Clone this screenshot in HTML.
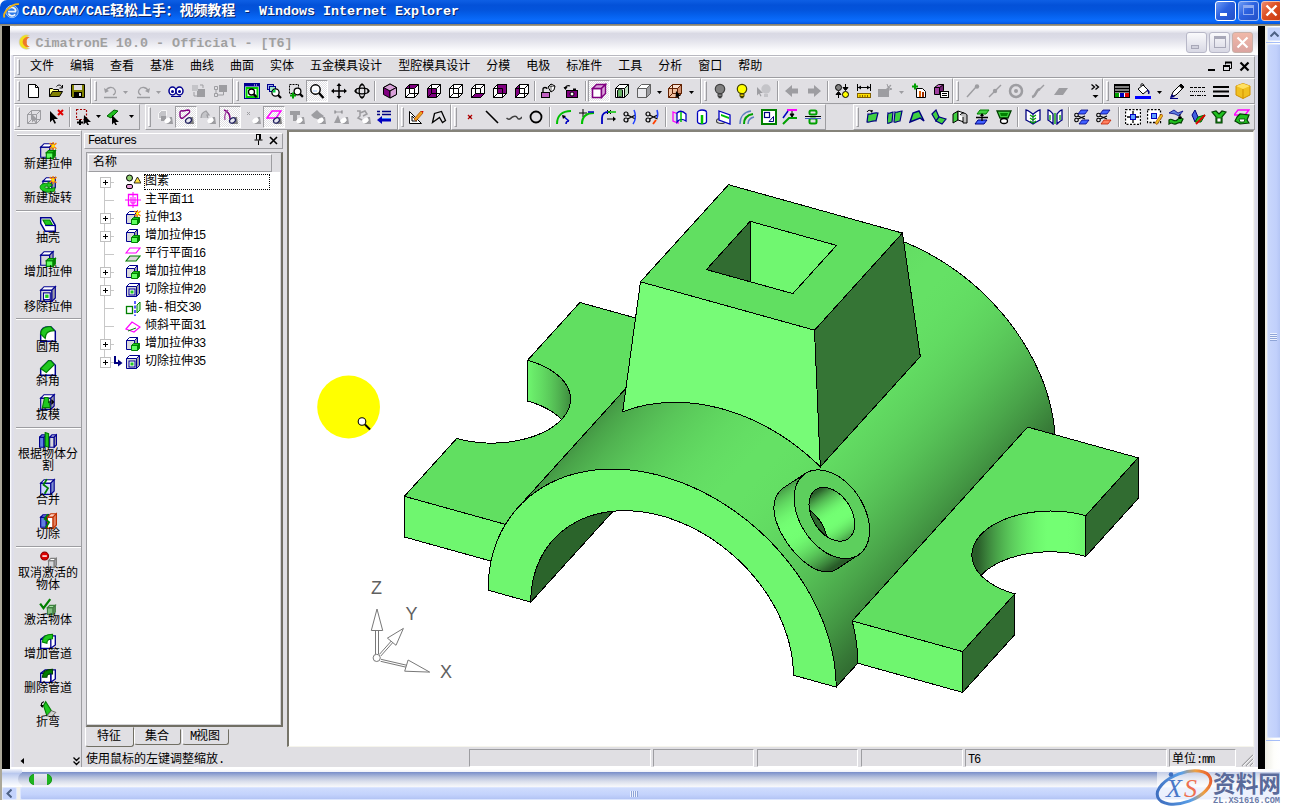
<!DOCTYPE html>
<html lang="zh-CN"><head><meta charset="utf-8"><title>CAD/CAM/CAE轻松上手：视频教程</title>
<style>
*{box-sizing:border-box;margin:0;padding:0}
html,body{width:1290px;height:812px;overflow:hidden;background:#fff}
body{position:relative;font-family:"Liberation Sans","Noto Sans CJK SC",sans-serif;font-size:12px;color:#000;line-height:1}
.a{position:absolute}
.cn{font-family:"Liberation Mono","Noto Sans CJK SC",sans-serif;font-size:12px;white-space:nowrap}
#ietitle{left:0;top:0;width:1280px;height:25px;border-radius:7px 0 0 0;overflow:hidden;
 background:linear-gradient(#0d5fe4 0,#0a5ae0 8%,#0351d8 20%,#0354dc 40%,#0560ec 60%,#0a6bfb 80%,#0966f4 88%,#0452da 96%,#0348cc 100%)}
#ietitle .t{left:22px;top:-1.5px;line-height:22px;color:#fff;font:bold 13.34px "Liberation Mono","Noto Sans CJK SC",monospace;white-space:nowrap;text-shadow:1px 1px 0 #0a246a;letter-spacing:0}
#ietitle .t b{font-size:14px;letter-spacing:-0.1px;font-weight:bold}
.capbtn{top:1px;width:21px;height:20px;border:1px solid #fff;border-radius:3px;background:linear-gradient(135deg,#6f9cf5 0,#2d62e0 45%,#2450c8 100%)}
#win{left:10px;top:26px;width:1248px;height:743px;background:#e0dfe3;border-radius:7px 7px 0 0}
#wtitle{height:29px;background:linear-gradient(#fff 0,#fcfcfe 10%,#d9d9e4 26%,#dcdce7 40%,#ebebf1 62%,#fafafc 82%,#fff 100%)}
#wtitle .t{left:25.5px;top:10px;line-height:14px;color:#a0a0a0;font:bold 13.4px "Liberation Mono",monospace;white-space:nowrap;}
.wbtn{top:6px;width:21px;height:21px;border:1px solid #b8b8c8;border-radius:3px;background:linear-gradient(#fafafc,#d8d8e4)}
.sep{background:#9d9da1;width:1px;box-shadow:1px 0 0 #fff}
.grip{width:3px;border-left:1px solid #fff;border-top:1px solid #fff;border-right:1px solid #9d9da1;border-bottom:1px solid #9d9da1;background:#e0dfe3}
.tbframe{border:1px solid;border-color:#fff #9d9da1 #9d9da1 #fff}
#menu span{display:inline-block;padding:0 8px}
.selbtn{border:1px solid;border-color:#9d9da1 #fff #fff #9d9da1;background:#fff;background-image:linear-gradient(45deg,#e0dfe3 25%,transparent 25%,transparent 75%,#e0dfe3 75%),linear-gradient(45deg,#e0dfe3 25%,transparent 25%,transparent 75%,#e0dfe3 75%);background-size:2px 2px;background-position:0 0,1px 1px}
.l{letter-spacing:-1.2px}
</style></head><body>
<!-- IE title bar -->
<div id="ietitle" class="a">
 <svg class="a" style="left:3px;top:2px" width="18" height="18" viewBox="0 0 18 18"><ellipse cx="9" cy="9.5" rx="6.2" ry="6.2" fill="#2f7be8" stroke="#9cc3f7" stroke-width="1"/><path d="M5 9.6h8M5.6 7a4 4 0 0 1 7.2 2.4M5.4 11.4a4 4 0 0 0 6.8 1" fill="none" stroke="#e8f2ff" stroke-width="1.7"/><path d="M1.5 15.5C-1 11 9 1 16 2.2" fill="none" stroke="#f0b310" stroke-width="1.8"/></svg>
 <div class="a t">CAD/CAM/CAE<b>轻松上手：视频教程</b> - Windows Internet Explorer</div>
 <div class="a capbtn" style="left:1215px"><i class="a" style="left:4px;top:11px;width:7px;height:3px;background:#fff"></i></div>
 <div class="a capbtn" style="left:1238px;border-color:#a9c1f5"><i class="a" style="left:4px;top:3px;width:11px;height:10px;border:1px solid #8eaaf0;border-top-width:3px"></i></div>
 <div class="a capbtn" style="left:1261px;background:linear-gradient(135deg,#ec8a6e 0,#dd4f22 45%,#c83a10 100%);border-color:#f3c0ac"><svg class="a" style="left:3px;top:2px" width="13" height="13"><path d="M1.5 1.5l10 10M11.5 1.5l-10 10" stroke="#fff" stroke-width="2.4"/></svg></div>
</div>
<div class="a" style="left:0;top:24px;width:1280px;height:2px;background:linear-gradient(#7d7967,#aaa594)"></div>
<!-- side strips -->
<div class="a" style="left:0;top:26px;width:2px;height:774px;background:#aca899"></div>
<div class="a" style="left:2px;top:26px;width:8px;height:743px;background:#000"></div>
<div class="a" style="left:1258px;top:26px;width:7px;height:743px;background:#000"></div>
<!-- IE vertical scrollbar -->
<div class="a" style="left:1265px;top:26px;width:15px;height:744px;background:linear-gradient(90deg,#eeede5,#fefefb 60%,#fff)"></div>
<div class="a" style="left:1267px;top:27px;width:13px;height:14px;background:#c4d3fc;border-radius:2px 0 0 2px;border:1px solid #dce6fd;border-right:0"><svg class="a" style="left:2px;top:3px" width="9" height="6"><path d="M0.5 5.5L4.5 1.5L8.5 5.5" fill="none" stroke="#4d6185" stroke-width="2"/></svg></div>
<div class="a" style="left:1266px;top:42px;width:14px;height:1px;background:#a5bdf8"></div>
<div class="a" style="left:1267px;top:44px;width:13px;height:694px;background:linear-gradient(90deg,#c9d7fc,#c1d0fb 70%,#b5c6f5);border-radius:2px 0 0 2px;border:1px solid #d8e2fd;border-right:0"></div>
<div class="a" style="left:1270px;top:333px;width:7px;height:8px;background:repeating-linear-gradient(#eef3ff 0 1px,#8fa5d8 1px 2px)"></div>
<div class="a" style="left:1266px;top:740px;width:14px;height:1px;background:#a5bdf8"></div>
<!-- player bar -->
<div class="a" style="left:2px;top:769px;width:1278px;height:18px;background:linear-gradient(#fff 0,#f2f4fa 14%,#7d92cb 19%,#8b9ed0 26%,#b4bfdc 45%,#d9deeb 68%,#eef0f6 88%,#f8f9fb 100%)"></div>
<div class="a" style="left:2px;top:769px;width:20px;height:18px;background:linear-gradient(#f4f6fc 0,#b9c8ee 25%,#dfe6f7 60%,#fff 100%)"></div>
<div class="a" style="left:18px;top:772px;width:16px;height:14px;border-radius:7px 0 0 7px;background:linear-gradient(#7d92cb 0,#8b9ed0 10%,#b4bfdc 40%,#d9deeb 70%,#f2f4f8 100%)"></div>
<div class="a" style="left:29px;top:774px;width:23px;height:11px;border-radius:5px;background:#1eb41e;border:1px solid #169a16"></div>
<div class="a" style="left:34px;top:774px;width:13px;height:11px;background:linear-gradient(#e6e7ee,#cfd1de)"></div>
<!-- IE horizontal scrollbar -->
<div class="a" style="left:2px;top:787px;width:1278px;height:13px;background:#f1f0ea"></div>
<div class="a" style="left:2px;top:787px;width:15px;height:13px;background:#c4d3fc;border:1px solid #dfe8fe;border-radius:2px"><svg class="a" style="left:3px;top:1px" width="6" height="9"><path d="M5.5 0.5L1.5 4.5L5.5 8.5" fill="none" stroke="#4d6185" stroke-width="2"/></svg></div>
<div class="a" style="left:20px;top:787px;width:1260px;height:13px;background:linear-gradient(#cfdcfd,#c3d2fc 60%,#b3c4f4);border:1px solid #dbe5fe;border-radius:2px 0 0 2px;border-right:0"></div>
<div class="a" style="left:630px;top:791px;width:8px;height:6px;background:repeating-linear-gradient(90deg,#eef3ff 0 1px,#8fa5d8 1px 2px)"></div>
<!-- CimatronE window -->
<div id="win" class="a"></div>
<div id="wtitle" class="a" style="left:10px;top:26px;width:1248px;border-radius:7px 7px 0 0">
 <svg class="a" style="left:6px;top:7px" width="18" height="18" viewBox="0 0 18 18"><path d="M13.5 2.5A7.2 7.2 0 1 0 13.5 15.5A6 6 0 0 1 9 9A6 6 0 0 1 13.5 2.5Z" fill="#f2e21a" stroke="#c8c8cc" stroke-width=".6"/><path d="M13.8 4.2A5.2 5.2 0 1 0 13.8 13.8A4.3 4.3 0 0 1 10.8 9A4.3 4.3 0 0 1 13.8 4.2Z" fill="#ee7a28"/></svg>
 <div class="a t">CimatronE 10.0 - Official - [T6]</div>
 <div class="a wbtn" style="left:1176px"><i class="a" style="left:4px;top:12px;width:8px;height:4px;border:1px solid #a8a8b8;background:#d0d0dc"></i></div>
 <div class="a wbtn" style="left:1199px"><i class="a" style="left:4px;top:3px;width:12px;height:12px;border:1px solid #a8a8b8;border-top-width:3px"></i></div>
 <div class="a wbtn" style="left:1222px;background:linear-gradient(#f0b8a8,#dba4a0);border-color:#c8b0a8"><svg class="a" style="left:3px;top:3px" width="13" height="13"><path d="M1.5 1.5l10 10M11.5 1.5l-10 10" stroke="#fff" stroke-width="2.2"/></svg></div>
</div>
<div class="a" style="left:10px;top:55px;width:4px;height:714px;background:linear-gradient(90deg,#fff 0,#f4f4f8 25%,#dcdce8 50%,#e0e0ea 100%)"></div>
<div class="a" style="left:1254px;top:55px;width:4px;height:714px;background:linear-gradient(90deg,#e6e6ee 0,#d8d8e6 50%,#dcdce8 100%)"></div>
<!-- menu bar -->
<div class="a" style="left:13px;top:55px;width:1242px;height:1px;background:#b8b8c0"></div>
<div class="a tbframe" style="left:14px;top:56px;width:1241px;height:22px"></div>
<div class="a grip" style="left:17px;top:59px;height:16px"></div>
<div id="menu" class="a cn" style="left:22px;top:60px;height:14px;line-height:14px">
<span>文件</span><span>编辑</span><span>查看</span><span>基准</span><span>曲线</span><span>曲面</span><span>实体</span><span>五金模具设计</span><span>型腔模具设计</span><span>分模</span><span>电极</span><span>标准件</span><span>工具</span><span>分析</span><span>窗口</span><span>帮助</span>
</div>
<div class="a" style="left:1208px;top:69px;width:7px;height:2px;background:#000"></div>
<svg class="a" style="left:1222px;top:61px" width="11" height="11"><path d="M3.5 3.5v-2h6v6h-2" fill="none" stroke="#000" stroke-width="1"/><path d="M3 1.5h7" stroke="#000" stroke-width="2"/><rect x="1.500" y="4.500" width="6" height="5" fill="#e0dfe3" stroke="#000"/><path d="M1 5h7" stroke="#000" stroke-width="2"/></svg>
<svg class="a" style="left:1239px;top:61px" width="11" height="11"><path d="M1.500 1.500l8 8M9.500 1.500l-8 8" stroke="#000" stroke-width="2.200"/></svg>
<!-- toolbars -->
<div class="a tbframe" style="left:14px;top:78px;width:77px;height:26px"></div>
<div class="a grip" style="left:17px;top:81px;height:20px"></div>
<div class="a tbframe" style="left:91px;top:78px;width:142px;height:26px"></div>
<div class="a grip" style="left:94px;top:81px;height:20px"></div>
<div class="a tbframe" style="left:233px;top:78px;width:468px;height:26px"></div>
<div class="a grip" style="left:236px;top:81px;height:20px"></div>
<div class="a tbframe" style="left:701px;top:78px;width:252px;height:26px"></div>
<div class="a grip" style="left:704px;top:81px;height:20px"></div>
<div class="a tbframe" style="left:953px;top:78px;width:150px;height:26px"></div>
<div class="a grip" style="left:956px;top:81px;height:20px"></div>
<div class="a tbframe" style="left:1103px;top:78px;width:152px;height:26px"></div>
<div class="a grip" style="left:1106px;top:81px;height:20px"></div>
<svg class="a" style="left:26px;top:83px" width="16" height="16" viewBox="0 0 16 16"><path d="M2.500 1.500h7l3 3v10h-10z" fill="#fff" stroke="#000"/><path d="M9.500 1.500v3h3" fill="none" stroke="#000"/></svg>
<svg class="a" style="left:48px;top:83px" width="16" height="16" viewBox="0 0 16 16"><path d="M1.500 13.500v-8h3l1 1h5v2" fill="#ffff80" stroke="#000"/><path d="M1.500 13.500l3-5h10l-3 5z" fill="#808000" stroke="#000"/><path d="M8.500 3.500c2-2.500 5-1.500 5.500 1m0.500-2.500v3h-3" fill="none" stroke="#000"/></svg>
<svg class="a" style="left:70px;top:83px" width="16" height="16" viewBox="0 0 16 16"><path d="M1.500 1.500h13v13h-12l-1-1z" fill="#808000" stroke="#000"/><rect x="4" y="2" width="8" height="5" fill="#e0dfe3"/><rect x="4" y="9" width="8" height="5" fill="#000"/><rect x="9" y="10" width="2" height="3" fill="#e0dfe3"/></svg>
<svg class="a" style="left:103px;top:83px" width="16" height="16" viewBox="0 0 16 16"><path d="M3 8c1-4 7-5 9-1 1 2 0 4-2 5" fill="none" stroke="#9d9da1" stroke-width="1.300"/><path d="M1 5l1 5 4-2z" fill="#9d9da1"/><path d="M1 14.500h13" stroke="#9d9da1" stroke-width="1.500"/></svg>
<svg class="a" style="left:123px;top:91px" width="5" height="3"><path d="M0 0h5l-2.500 3z" fill="#9d9da1"/></svg>
<svg class="a" style="left:135px;top:83px" width="16" height="16" viewBox="0 0 16 16"><path d="M13 8c-1-4-7-5-9-1-1 2 0 4 2 5" fill="none" stroke="#9d9da1" stroke-width="1.300"/><path d="M15 5l-1 5-4-2z" fill="#9d9da1"/><path d="M2 14.500h13" stroke="#9d9da1" stroke-width="1.500"/></svg>
<svg class="a" style="left:156px;top:91px" width="5" height="3"><path d="M0 0h5l-2.500 3z" fill="#9d9da1"/></svg>
<svg class="a" style="left:168px;top:83px" width="16" height="16" viewBox="0 0 16 16"><ellipse cx="4.500" cy="8" rx="3.500" ry="4" fill="#fff" stroke="#000090" stroke-width="1.500"/><ellipse cx="11.500" cy="8" rx="3.500" ry="4" fill="#fff" stroke="#000090" stroke-width="1.500"/><circle cx="4.500" cy="8.500" r="1.500" fill="#000090"/><circle cx="11.500" cy="8.500" r="1.500" fill="#000090"/><path d="M3 13.500h10" stroke="#000090"/></svg>
<svg class="a" style="left:190px;top:83px" width="16" height="16" viewBox="0 0 16 16"><rect x="7" y="6" width="8" height="8" fill="#9d9da1"/><rect x="2" y="2" width="6" height="6" fill="#c4c4c8"/><path d="M4 9v4h3M10 2h3v3" fill="none" stroke="#9d9da1"/></svg>
<svg class="a" style="left:212px;top:83px" width="16" height="16" viewBox="0 0 16 16"><rect x="7" y="2" width="8" height="7" fill="#9d9da1"/><path d="M2.500 3.500h3v3h-3zM2.500 10.500h3v3h-3zM4 6.500v4M5.500 12h6v-3" fill="none" stroke="#9d9da1"/></svg>
<svg class="a" style="left:244px;top:83px" width="16" height="16" viewBox="0 0 16 16"><rect x="0.500" y="0.500" width="15" height="15" fill="#fff" stroke="#000090"/><rect x="1" y="1" width="14" height="2.500" fill="#000090"/><path d="M10 2h1M12 2h1" stroke="#fff"/><rect x="2.500" y="5" width="11" height="9" fill="#fff" stroke="#00d000" stroke-width="2"/><circle cx="7.5" cy="9" r="3" fill="#fff" stroke="#000" stroke-width="1.3"/><path d="M9.6 11.1l3 3" stroke="#000" stroke-width="2.2"/></svg>
<svg class="a" style="left:266px;top:83px" width="16" height="16" viewBox="0 0 16 16"><rect x="1.500" y="1.500" width="6" height="5" fill="#a0b0e8" stroke="#000090"/><rect x="3.500" y="3.500" width="6" height="5" fill="#a0e8c0" stroke="#000090"/><circle cx="9.5" cy="9.5" r="3.6" fill="#fff" stroke="#000" stroke-width="1.3"/><path d="M12.02 12.02l3 3" stroke="#000" stroke-width="2.2"/><path d="M6.500 9.500a3 3 0 0 1 3-3v3z" fill="#00d040"/></svg>
<svg class="a" style="left:288px;top:83px" width="16" height="16" viewBox="0 0 16 16"><rect x="1.500" y="1.500" width="9" height="9" fill="none" stroke="#000" stroke-dasharray="2 1"/><circle cx="9.5" cy="8.5" r="3.4" fill="#fff" stroke="#000" stroke-width="1.3"/><path d="M11.88 10.88l3 3" stroke="#000" stroke-width="2.2"/><path d="M2 12.500h6M5 9.500v6" stroke="#00a000" stroke-width="2"/></svg>
<div class="a selbtn" style="left:306px;top:80px;width:22px;height:22px"></div>
<svg class="a" style="left:309px;top:83px" width="16" height="16" viewBox="0 0 16 16"><circle cx="6.500" cy="6.500" r="4.700" fill="#fff" stroke="#000" stroke-width="1.400"/><path d="M10 10l4.500 5" stroke="#000" stroke-width="2.400"/><path d="M4 8h4" stroke="#a0c0f0"/></svg>
<svg class="a" style="left:331px;top:83px" width="16" height="16" viewBox="0 0 16 16"><path d="M8 1v14M1 8h14" stroke="#000" stroke-width="1.500"/><path d="M8 0l-2.500 3h5zM8 16l-2.500-3h5zM0 8l3-2.500v5zM16 8l-3-2.500v5z" fill="#000"/></svg>
<svg class="a" style="left:354px;top:83px" width="16" height="16" viewBox="0 0 16 16"><ellipse cx="8" cy="8" rx="6.500" ry="2.800" fill="none" stroke="#000" stroke-width="1.200"/><ellipse cx="8" cy="8" rx="2.800" ry="6.500" fill="none" stroke="#000" stroke-width="1.200"/><path d="M8 0l-2.500 2.500h5zM8 16l2.500-2.500h-5zM0 8l2.500 2.500v-5zM16 8l-2.500-2.500v5z" fill="#000"/><circle cx="8" cy="8" r="2" fill="#e0dfe3"/></svg>
<div class="a sep" style="left:374px;top:81px;height:20px"></div>
<svg class="a" style="left:382px;top:83px" width="16" height="16" viewBox="0 0 16 16"><path d="M8 1l6.500 3.500v7l-6.500 3.500-6.500-3.500v-7z" fill="#800080" stroke="#000"/><path d="M1.500 4.500l6.500 3.500 6.500-3.500-6.500-3.500z" fill="#d8a0d8" stroke="#000"/><path d="M8 8v7" stroke="#000"/><path d="M8 8l6.500-3.500v7l-6.500 3.500z" fill="#d8a0d8" stroke="#000"/></svg>
<svg class="a" style="left:404px;top:83px" width="16" height="16" viewBox="0 0 16 16"><path d="M1.5 5.5h9v9h-9z" fill="#fff" stroke="#000"/><path d="M1.5 5.5l4-4h9l-4 4z" fill="#800080" stroke="#000"/><path d="M10.5 5.500l4-4v9l-4 4z" fill="#fff" stroke="#000"/><path d="M5.500 1.500v9h9M5.500 10.500l-4 4" fill="none" stroke="#000"/></svg>
<svg class="a" style="left:426px;top:83px" width="16" height="16" viewBox="0 0 16 16"><path d="M1.5 5.5h9v9h-9z" fill="#800080" stroke="#000"/><path d="M1.5 5.5l4-4h9l-4 4z" fill="#fff" stroke="#000"/><path d="M10.5 5.500l4-4v9l-4 4z" fill="#fff" stroke="#000"/><path d="M5.500 1.500v9h9M5.500 10.500l-4 4" fill="none" stroke="#000"/></svg>
<svg class="a" style="left:448px;top:83px" width="16" height="16" viewBox="0 0 16 16"><path d="M1.5 5.5h9v9h-9z" fill="#fff" stroke="#000"/><path d="M1.5 5.5l4-4h9l-4 4z" fill="#fff" stroke="#000"/><path d="M10.5 5.500l4-4v9l-4 4z" fill="#fff" stroke="#000"/><path d="M5.500 1.500v9h9M5.500 10.500l-4 4" fill="none" stroke="#000"/></svg>
<svg class="a" style="left:470px;top:83px" width="16" height="16" viewBox="0 0 16 16"><path d="M1.5 5.5h9v9h-9z" fill="#fff" stroke="#000"/><path d="M1.5 5.5l4-4h9l-4 4z" fill="#fff" stroke="#000"/><path d="M10.5 5.500l4-4v9l-4 4z" fill="#fff" stroke="#000"/><path d="M5.500 1.500v9h9M5.500 10.500l-4 4" fill="none" stroke="#000"/><path d="M1.500 14.500l4-4h9l-4 4z" fill="#800080" stroke="#000"/></svg>
<svg class="a" style="left:492px;top:83px" width="16" height="16" viewBox="0 0 16 16"><path d="M1.5 5.5h9v9h-9z" fill="#fff" stroke="#000"/><path d="M1.5 5.5l4-4h9l-4 4z" fill="#fff" stroke="#000"/><path d="M10.5 5.500l4-4v9l-4 4z" fill="#fff" stroke="#000"/><path d="M5.500 1.500v9h9M5.500 10.500l-4 4" fill="none" stroke="#000"/><path d="M5.500 1.500h9v9h-9z" fill="#800080" stroke="#000"/><path d="M1.500 5.500h9v9h-9z" fill="none" stroke="#000"/></svg>
<svg class="a" style="left:514px;top:83px" width="16" height="16" viewBox="0 0 16 16"><path d="M1.5 5.5h9v9h-9z" fill="#fff" stroke="#000"/><path d="M1.5 5.5l4-4h9l-4 4z" fill="#fff" stroke="#000"/><path d="M10.5 5.500l4-4v9l-4 4z" fill="#fff" stroke="#000"/><path d="M5.500 1.500v9h9M5.500 10.500l-4 4" fill="none" stroke="#000"/><path d="M1.500 5.500l4-4v9l-4 4z" fill="#800080" stroke="#000"/><path d="M1.500 5.500h9v9h-9z" fill="none" stroke="#000"/></svg>
<div class="a sep" style="left:534px;top:81px;height:20px"></div>
<svg class="a" style="left:540px;top:83px" width="16" height="16" viewBox="0 0 16 16"><rect x="1.500" y="9.500" width="8" height="5" fill="#c060c0" stroke="#000"/><path d="M3 9v-3c0-2 4-2 4 0" fill="none" stroke="#000" stroke-width="1.300"/><path d="M8 4l3-3 4 2-1 4-3 2z" fill="#fff" stroke="#000"/><path d="M11 1l0 8M8 4l7-1" stroke="#000" stroke-width=".6"/></svg>
<svg class="a" style="left:563px;top:83px" width="16" height="16" viewBox="0 0 16 16"><rect x="3.500" y="7.500" width="11" height="7" fill="#800080" stroke="#000"/><circle cx="9" cy="11" r="2" fill="#fff" stroke="#000"/><rect x="10" y="5.500" width="3" height="2" fill="#000"/><path d="M2 6c0-3 3-4 5-3" fill="none" stroke="#000" stroke-width="1.300"/><path d="M0.500 4l2 3 2-3z" fill="#000"/></svg>
<div class="a sep" style="left:585px;top:81px;height:20px"></div>
<div class="a selbtn" style="left:588px;top:80px;width:22px;height:22px"></div>
<svg class="a" style="left:591px;top:83px" width="16" height="16" viewBox="0 0 16 16"><path d="M1.500 5.500h9v9h-9z" fill="#fff" stroke="#800080" stroke-width="1.600"/><path d="M1.500 5.500l4-4h9l-4 4z" fill="#d8a0d8" stroke="#800080" stroke-width="1.400"/><path d="M10.500 5.500l4-4v9l-4 4z" fill="#d8a0d8" stroke="#800080" stroke-width="1.400"/></svg>
<svg class="a" style="left:614px;top:83px" width="16" height="16" viewBox="0 0 16 16"><path d="M1.5 5.5h9v9h-9z" fill="#fff" stroke="#000"/><path d="M1.5 5.5l4-4h9l-4 4z" fill="#fff" stroke="#000"/><path d="M10.5 5.500l4-4v9l-4 4z" fill="#c0e0c0" stroke="#000"/><path d="M4 7v6M6 6v8M8 7v6" stroke="#008000" stroke-width="1.200"/><path d="M3.500 8c1-3 5-3 5 0v6h-5z" fill="none" stroke="#000"/></svg>
<svg class="a" style="left:636px;top:83px" width="16" height="16" viewBox="0 0 16 16"><path d="M1.5 5.5h9v9h-9z" fill="#e8e8ec" stroke="#606060"/><path d="M1.5 5.5l4-4h9l-4 4z" fill="#fff" stroke="#606060"/><path d="M10.5 5.500l4-4v9l-4 4z" fill="#9d9da1" stroke="#606060"/></svg>
<svg class="a" style="left:657px;top:91px" width="5" height="3"><path d="M0 0h5l-2.500 3z" fill="#000"/></svg>
<svg class="a" style="left:667px;top:83px" width="16" height="16" viewBox="0 0 16 16"><path d="M1.5 5.5h9v9h-9z" fill="#f0c0a0" stroke="#602000"/><path d="M1.5 5.5l4-4h9l-4 4z" fill="#f8e0d0" stroke="#602000"/><path d="M10.5 5.500l4-4v9l-4 4z" fill="#d09070" stroke="#602000"/><path d="M5.500 1.500v9h9M5.500 10.500l-4 4" fill="none" stroke="#602000"/><path d="M9 8l5 5h-3l1.500 2.500-1 .5-1.500-2.500-1.500 1.500z" fill="#000"/></svg>
<svg class="a" style="left:689px;top:91px" width="5" height="3"><path d="M0 0h5l-2.500 3z" fill="#000"/></svg>
<svg class="a" style="left:712px;top:83px" width="16" height="16" viewBox="0 0 16 16"><circle cx="8" cy="6" r="4.700" fill="#808080" stroke="#404040" stroke-width="1.200"/><path d="M6 11h4v2.500h-4z" fill="#808080" stroke="#404040"/><path d="M6.500 14.500h3" stroke="#404040" stroke-width="1.500"/></svg>
<svg class="a" style="left:734px;top:83px" width="16" height="16" viewBox="0 0 16 16"><circle cx="8" cy="6" r="4.700" fill="#ffff00" stroke="#404000" stroke-width="1.200"/><path d="M6 11h4v2.500h-4z" fill="#e0c000" stroke="#404000"/><path d="M6.500 14.500h3" stroke="#404000" stroke-width="1.500"/></svg>
<svg class="a" style="left:756px;top:83px" width="16" height="16" viewBox="0 0 16 16"><circle cx="10" cy="6" r="4.700" fill="#c4c4c8"/><path d="M8 11h4v3h-4z" fill="#c4c4c8"/><path d="M1 4l6 6h-3l1.500 3-1 .5-1.500-3-2 2z" fill="#9d9da1"/></svg>
<div class="a sep" style="left:777px;top:81px;height:20px"></div>
<svg class="a" style="left:784px;top:83px" width="16" height="16" viewBox="0 0 16 16"><path d="M1 8l7-6v3.500h6v5h-6v3.500z" fill="#9d9da1"/></svg>
<svg class="a" style="left:806px;top:83px" width="16" height="16" viewBox="0 0 16 16"><path d="M15 8l-7-6v3.500h-6v5h6v3.500z" fill="#9d9da1"/></svg>
<div class="a sep" style="left:827px;top:81px;height:20px"></div>
<svg class="a" style="left:834px;top:83px" width="16" height="16" viewBox="0 0 16 16"><circle cx="4.500" cy="4.500" r="3" fill="#808080" stroke="#000"/><circle cx="11.500" cy="11.500" r="3" fill="#ffff00" stroke="#000"/><path d="M11.500 1v6M9 4.500l2.500 3 2.500-3zM4.500 15v-6M2 11.500l2.500-3 2.500 3z" stroke="#000" fill="#000"/></svg>
<svg class="a" style="left:856px;top:83px" width="16" height="16" viewBox="0 0 16 16"><path d="M1.500 1v7M14.500 1v7M2 4.500h12" stroke="#000" fill="none"/><path d="M2 4.500l3-2v4zM14 4.500l-3-2v4z" fill="#000"/><rect x="1.500" y="10.500" width="13" height="4" fill="#ffe000" stroke="#806000"/><path d="M4 12v2M6.500 12v2M9 12v2M11.500 12v2" stroke="#806000"/></svg>
<svg class="a" style="left:877px;top:83px" width="16" height="16" viewBox="0 0 16 16"><path d="M1 6h8l3-3v11h-11z" fill="#9d9da1"/><path d="M10 1l1 3 3-2-2 3 3 1-3 1" fill="none" stroke="#9d9da1"/></svg>
<svg class="a" style="left:899px;top:91px" width="5" height="3"><path d="M0 0h5l-2.500 3z" fill="#9d9da1"/></svg>
<svg class="a" style="left:911px;top:83px" width="16" height="16" viewBox="0 0 16 16"><path d="M1 3.500h6M4 0.500v6" stroke="#00a000" stroke-width="2"/><path d="M5.500 5.500h6l3 3v6h-9z" fill="#fff" stroke="#000"/><rect x="8" y="8" width="2" height="6" fill="#e06000"/><rect x="11" y="9" width="2" height="5" fill="#a03000"/></svg>
<svg class="a" style="left:933px;top:83px" width="16" height="16" viewBox="0 0 16 16"><path d="M1.500 4.500l4-3h5l0 3-4 3h-5z" fill="#c060c0" stroke="#000"/><path d="M1.500 4.500h5v7h-5z" fill="#a040a0" stroke="#000"/><path d="M6.500 4.500l4-3v6l-4 4z" fill="#702070" stroke="#000"/><rect x="7.500" y="8.500" width="8" height="6" fill="#fff" stroke="#000"/><path d="M9 10.500h5M9 12.500h5" stroke="#000"/></svg>
<svg class="a" style="left:965px;top:83px" width="16" height="16" viewBox="0 0 16 16"><path d="M2 14l9-10" stroke="#9d9da1" stroke-width="1.500"/><circle cx="12" cy="3.500" r="2.200" fill="#9d9da1"/></svg>
<svg class="a" style="left:987px;top:83px" width="16" height="16" viewBox="0 0 16 16"><path d="M2 14l12-12" stroke="#9d9da1" stroke-width="1.500"/><circle cx="8" cy="8" r="2.200" fill="#9d9da1"/></svg>
<svg class="a" style="left:1008px;top:83px" width="16" height="16" viewBox="0 0 16 16"><circle cx="8" cy="8" r="6" fill="none" stroke="#9d9da1" stroke-width="2.500"/><circle cx="8" cy="8" r="2" fill="#9d9da1"/></svg>
<svg class="a" style="left:1030px;top:83px" width="16" height="16" viewBox="0 0 16 16"><path d="M2 14c5-1 3-7 8-8" fill="none" stroke="#9d9da1" stroke-width="2.500"/><path d="M9 7l5-5" stroke="#9d9da1" stroke-width="1.500"/></svg>
<svg class="a" style="left:1053px;top:83px" width="16" height="16" viewBox="0 0 16 16"><path d="M1 12l5-7h9l-5 7z" fill="#9d9da1"/></svg>
<svg class="a" style="left:1091px;top:84px" width="9" height="16"><path d="M0.500 0.500l3 2.500-3 2.500M4.500 0.500l3 2.500-3 2.500" fill="none" stroke="#000" stroke-width="1.300"/><path d="M1.500 11h6l-3 3z" fill="#000"/></svg>
<svg class="a" style="left:1114px;top:83px" width="16" height="16" viewBox="0 0 16 16"><rect x="0.500" y="1.500" width="15" height="13" fill="#fff" stroke="#000"/><path d="M1 2.500h14M1 5.500h14M1 8.500h14" stroke="#000" stroke-width="2"/><rect x="1" y="10" width="4" height="4" fill="#00a000"/><rect x="6" y="10" width="4" height="4" fill="#0000c0"/><rect x="11" y="10" width="4" height="4" fill="#e00000"/></svg>
<svg class="a" style="left:1135px;top:83px" width="16" height="16" viewBox="0 0 16 16"><path d="M3 6l5-4 5 5-5 4z" fill="#fff" stroke="#000"/><path d="M6 3c-1-3 3-3 3 0" fill="none" stroke="#000"/><path d="M12 7c2 1 2 3 1.500 4" fill="none" stroke="#000080" stroke-width="1.500"/><rect x="0" y="13" width="16" height="3" fill="#0000ff"/></svg>
<svg class="a" style="left:1169px;top:83px" width="16" height="16" viewBox="0 0 16 16"><path d="M2 14l2-5 8-8 3 3-8 8z" fill="#fff" stroke="#000"/><path d="M10 3l3 3 2-2-3-3z" fill="#000"/><path d="M1 15l5-1-3-3z" fill="#000080"/><path d="M1 15.500h8" stroke="#000080"/></svg>
<svg class="a" style="left:1190px;top:83px" width="16" height="16" viewBox="0 0 16 16"><path d="M0 4.500h16" stroke="#000" stroke-dasharray="3 1"/><path d="M0 8.500h16" stroke="#000" stroke-dasharray="1 1"/><path d="M0 12.500h16" stroke="#000" stroke-dasharray="4 1 1 1"/></svg>
<svg class="a" style="left:1213px;top:83px" width="16" height="16" viewBox="0 0 16 16"><path d="M0 4h16M0 8.500h16M0 13h16" stroke="#000" stroke-width="2"/></svg>
<svg class="a" style="left:1235px;top:83px" width="16" height="16" viewBox="0 0 16 16"><path d="M8 0.500l7 2.500v9l-7 3.500-7-3.500v-9z" fill="#f0c020" stroke="#d09000"/><path d="M1 3l7 3 7-3-7-2.500z" fill="#ffe060"/><path d="M8 6v9.500" stroke="#d09000"/></svg>
<svg class="a" style="left:1157px;top:91px" width="5" height="3"><path d="M0 0h5l-2.500 3z" fill="#000"/></svg>
<div class="a tbframe" style="left:14px;top:104px;width:126px;height:26px"></div>
<div class="a grip" style="left:17px;top:107px;height:20px"></div>
<div class="a tbframe" style="left:145px;top:104px;width:253px;height:26px"></div>
<div class="a grip" style="left:148px;top:107px;height:20px"></div>
<div class="a tbframe" style="left:398px;top:104px;width:53px;height:26px"></div>
<div class="a grip" style="left:401px;top:107px;height:20px"></div>
<div class="a tbframe" style="left:451px;top:104px;width:375px;height:26px"></div>
<div class="a grip" style="left:454px;top:107px;height:20px"></div>
<div class="a tbframe" style="left:853px;top:104px;width:402px;height:26px"></div>
<div class="a grip" style="left:856px;top:107px;height:20px"></div>
<svg class="a" style="left:26px;top:109px" width="16" height="16" viewBox="0 0 16 16"><path d="M1.5 5.5h9v9h-9z" fill="#e0dfe3" stroke="#9d9da1"/><path d="M1.5 5.5l4-4h9l-4 4z" fill="#e0dfe3" stroke="#9d9da1"/><path d="M10.5 5.500l4-4v9l-4 4z" fill="#e0dfe3" stroke="#9d9da1"/><path d="M5.500 1.500v9h9M5.500 10.500l-4 4" fill="none" stroke="#9d9da1"/><path d="M6 5l6 6h-3l1.500 3-1 .5-1.500-3-2 2z" fill="#9d9da1"/></svg>
<svg class="a" style="left:49px;top:109px" width="16" height="16" viewBox="0 0 16 16"><path d="M1 2l8 8h-4l2 4-1.500 .7-2-4-2.500 2.500z" fill="#000"/><path d="M9 1l5 5M14 1l-5 5" stroke="#e00000" stroke-width="2"/></svg>
<div class="a sep" style="left:69px;top:107px;height:20px"></div>
<svg class="a" style="left:76px;top:109px" width="16" height="16" viewBox="0 0 16 16"><rect x="0.500" y="0.500" width="10" height="10" fill="none" stroke="#a00000" stroke-dasharray="2 1.500" stroke-width="1.200"/><path d="M8 6l7 7h-3.500l1.500 3-1.500 .5-1.500-3-2.500 2z" fill="#000"/><path d="M1 13.500h6M4 10.500v6" stroke="#000" stroke-width="2"/></svg>
<svg class="a" style="left:96px;top:115px" width="5" height="3"><path d="M0 0h5l-2.500 3z" fill="#000"/></svg>
<svg class="a" style="left:106px;top:109px" width="16" height="16" viewBox="0 0 16 16"><path d="M1 7l7-6 4 1-7 7z" fill="#20c020" stroke="#006000"/><path d="M6 6l7 7h-3.500l1.500 3-1.500 .5-1.500-3-2 2z" fill="#000"/></svg>
<svg class="a" style="left:129px;top:115px" width="5" height="3"><path d="M0 0h5l-2.500 3z" fill="#000"/></svg>
<svg class="a" style="left:157px;top:109px" width="16" height="16" viewBox="0 0 16 16"><path d="M1.500 4.500l3-3h5v5l-3 3h-5z" fill="#c4c4c8" stroke="#fff" stroke-width=".800"/><path d="M4 7h5v5h-5z" fill="#9d9da1"/><path d="M9 15l4-7h2l1 7z" fill="#9d9da1"/><ellipse cx="10.500" cy="11.500" rx="3" ry="2.100" transform="rotate(-35 10.500 11.500)" fill="#fff" stroke="#fff" stroke-width=".800"/></svg>
<div class="a selbtn" style="left:175px;top:106px;width:22px;height:22px"></div>
<svg class="a" style="left:178px;top:109px" width="16" height="16" viewBox="0 0 16 16"><path d="M2 3.500c0-2 2-2 3-1.500l5-1c2 0 2 2 1 3l-6 5c-2 1-3-1-3-2.500z" fill="none" stroke="#800080" stroke-width="1.400"/><path d="M9 15l4-7h2l1 7z" fill="#808080"/><ellipse cx="10.500" cy="11.500" rx="3.200" ry="2.300" transform="rotate(-35 10.500 11.500)" fill="#e8e8f0" stroke="#202060" stroke-width="1.200"/></svg>
<svg class="a" style="left:200px;top:109px" width="16" height="16" viewBox="0 0 16 16"><path d="M1 9c0-4 2-6 5-7l3 4-2 0 1 3" fill="#c4c4c8" stroke="#9d9da1" stroke-width="1.200"/><path d="M9 15l4-7h2l1 7z" fill="#9d9da1"/><ellipse cx="10.500" cy="11.500" rx="3" ry="2.100" transform="rotate(-35 10.500 11.500)" fill="#fff" stroke="#fff" stroke-width=".800"/></svg>
<div class="a selbtn" style="left:219px;top:106px;width:22px;height:22px"></div>
<svg class="a" style="left:222px;top:109px" width="16" height="16" viewBox="0 0 16 16"><path d="M2 1c3 1 6 4 6 9" fill="none" stroke="#800080" stroke-width="1.500"/><path d="M6 1c-3 3-4 6-3 10" fill="none" stroke="#a040a0" stroke-width="1.300"/><path d="M9 15l4-7h2l1 7z" fill="#808080"/><ellipse cx="10.500" cy="11.500" rx="3.200" ry="2.300" transform="rotate(-35 10.500 11.500)" fill="#e8e8f0" stroke="#202060" stroke-width="1.200"/></svg>
<svg class="a" style="left:245px;top:109px" width="16" height="16" viewBox="0 0 16 16"><path d="M2 3l3 3M5 3l-3 3" stroke="#9d9da1"/><path d="M9 15l4-7h2l1 7z" fill="#9d9da1"/><ellipse cx="10.500" cy="11.500" rx="3" ry="2.100" transform="rotate(-35 10.500 11.500)" fill="#fff" stroke="#fff" stroke-width=".800"/></svg>
<div class="a selbtn" style="left:263px;top:106px;width:22px;height:22px"></div>
<svg class="a" style="left:266px;top:109px" width="16" height="16" viewBox="0 0 16 16"><path d="M1 9l5-7h9l-5 7z" fill="none" stroke="#ff00ff" stroke-width="1.400"/><path d="M9 15l4-7h2l1 7z" fill="#808080"/><ellipse cx="10.500" cy="11.500" rx="3.200" ry="2.300" transform="rotate(-35 10.500 11.500)" fill="#e8e8f0" stroke="#202060" stroke-width="1.200"/></svg>
<svg class="a" style="left:289px;top:109px" width="16" height="16" viewBox="0 0 16 16"><path d="M1 2h10v4h-3v6h-4v-6h-3z" fill="#9d9da1"/><path d="M9 15l4-7h2l1 7z" fill="#9d9da1"/><ellipse cx="10.500" cy="11.500" rx="3" ry="2.100" transform="rotate(-35 10.500 11.500)" fill="#fff" stroke="#fff" stroke-width=".800"/></svg>
<svg class="a" style="left:310px;top:109px" width="16" height="16" viewBox="0 0 16 16"><path d="M1 6l6-5 3 3 4 3-4 4-6-2z" fill="#9d9da1"/><path d="M9 15l4-7h2l1 7z" fill="#9d9da1"/><ellipse cx="10.500" cy="11.500" rx="3" ry="2.100" transform="rotate(-35 10.500 11.500)" fill="#fff" stroke="#fff" stroke-width=".800"/></svg>
<svg class="a" style="left:333px;top:109px" width="16" height="16" viewBox="0 0 16 16"><path d="M2 1v4M9 1v4M2 3h7" stroke="#9d9da1"/><path d="M3 2.500l-1.500.500 1.500.500zM8 2.500l1.500.500-1.500.500z" stroke="#9d9da1"/><path d="M1 14l4-8 3 8z" fill="#9d9da1"/><path d="M9 15l4-7h2l1 7z" fill="#9d9da1"/><ellipse cx="10.500" cy="11.500" rx="3" ry="2.100" transform="rotate(-35 10.500 11.500)" fill="#fff" stroke="#fff" stroke-width=".800"/></svg>
<svg class="a" style="left:355px;top:109px" width="16" height="16" viewBox="0 0 16 16"><path d="M2 2h3v5l-2 2 4 2M5 4l5-2 2 3-4 2" fill="none" stroke="#9d9da1" stroke-width="1.500"/><path d="M9 15l4-7h2l1 7z" fill="#9d9da1"/><ellipse cx="10.500" cy="11.500" rx="3" ry="2.100" transform="rotate(-35 10.500 11.500)" fill="#fff" stroke="#fff" stroke-width=".800"/></svg>
<svg class="a" style="left:376px;top:109px" width="16" height="16" viewBox="0 0 16 16"><path d="M1 2.500h3M6 2.500h9M1 5.500h3M6 5.500h9" stroke="#000080" stroke-width="1.500"/><path d="M1 11l5-4v2.500h9v3h-9v2.500z" fill="#0000c0"/><path d="M6 9.500h9" stroke="#4080ff"/></svg>
<svg class="a" style="left:408px;top:109px" width="16" height="16" viewBox="0 0 16 16"><path d="M1.500 14.500v-12l12 12z" fill="#fff" stroke="#000"/><path d="M4 12v-5l5 5z" fill="none" stroke="#000"/><path d="M6 10l7-8 2 2-7 8z" fill="#f0a020" stroke="#a04000" stroke-width=".700"/><path d="M13 2l2 2 .5-2z" fill="#e00000"/></svg>
<svg class="a" style="left:431px;top:109px" width="16" height="16" viewBox="0 0 16 16"><path d="M1.500 13.500l2-9 7-2 4 9-3 2-3-5z" fill="none" stroke="#000" stroke-width="1.300"/></svg>
<svg class="a" style="left:462px;top:109px" width="16" height="16" viewBox="0 0 16 16"><path d="M6 6l4 4M10 6l-4 4" stroke="#c00000" stroke-width="1.300"/><rect x="7" y="7" width="2" height="2" fill="#800000"/></svg>
<svg class="a" style="left:484px;top:109px" width="16" height="16" viewBox="0 0 16 16"><path d="M2 2l12 12" stroke="#000" stroke-width="1.600"/></svg>
<svg class="a" style="left:506px;top:109px" width="16" height="16" viewBox="0 0 16 16"><path d="M0.500 9c3 3 4 0 6-1s4-1 5 1 3 1 4.500-1" fill="none" stroke="#404040" stroke-width="1.500"/></svg>
<svg class="a" style="left:528px;top:109px" width="16" height="16" viewBox="0 0 16 16"><circle cx="8" cy="8" r="5.500" fill="none" stroke="#000" stroke-width="1.800"/></svg>
<div class="a sep" style="left:549px;top:107px;height:20px"></div>
<svg class="a" style="left:556px;top:109px" width="16" height="16" viewBox="0 0 16 16"><path d="M1 15c0-8 5-13 14-13" fill="none" stroke="#00c000" stroke-width="2"/><path d="M7 7l6 5M13 12c-2 0-3 1-3 3" fill="none" stroke="#0000c0" stroke-width="1.500"/><path d="M6 6l1 4 3-3z" fill="#000"/></svg>
<svg class="a" style="left:579px;top:109px" width="16" height="16" viewBox="0 0 16 16"><path d="M0 4h8M4 0v8" stroke="#000"/><path d="M3 15c0-7 4-11 12-11" fill="none" stroke="#00c000" stroke-width="2.200"/><path d="M9 3h6" stroke="#0000c0" stroke-width="1.500"/></svg>
<svg class="a" style="left:601px;top:109px" width="16" height="16" viewBox="0 0 16 16"><path d="M1 15v-6c0-4 3-6 6-6" fill="none" stroke="#0000c0" stroke-width="1.800"/><path d="M6 1l4 4M10 1l-4 4" stroke="#000"/><path d="M7 3h8" stroke="#00c000" stroke-width="1.500"/><path d="M6 10h8" stroke="#000"/><path d="M15 10l-3-2.500v5z" fill="#000"/></svg>
<svg class="a" style="left:623px;top:109px" width="16" height="16" viewBox="0 0 16 16"><circle cx="3" cy="5" r="2" fill="none" stroke="#000" stroke-width="1.200"/><circle cx="3" cy="11" r="2" fill="none" stroke="#000" stroke-width="1.200"/><path d="M4.500 6l8 4M4.500 10l8-4" stroke="#000" stroke-width="1.200"/><path d="M11 1c2 4 2 10-1 14" fill="none" stroke="#2040ff" stroke-width="1.500"/></svg>
<svg class="a" style="left:645px;top:109px" width="16" height="16" viewBox="0 0 16 16"><circle cx="3" cy="5" r="2" fill="none" stroke="#000" stroke-width="1.200"/><circle cx="3" cy="11" r="2" fill="none" stroke="#000" stroke-width="1.200"/><path d="M4.500 6l8 4M4.500 10l8-4" stroke="#000" stroke-width="1.200"/><path d="M12 1c1 3 1 6 0 8" fill="none" stroke="#2040ff" stroke-width="1.500"/><path d="M11 11l-3 4" stroke="#ff4000" stroke-width="1.800"/></svg>
<div class="a sep" style="left:665px;top:107px;height:20px"></div>
<svg class="a" style="left:672px;top:109px" width="16" height="16" viewBox="0 0 16 16"><path d="M1 3l5 2v9l-5-2z" fill="none" stroke="#ff00ff" stroke-width="1.300"/><path d="M5 4c3-3 6-2 9 1v7c-3-2-6-3-9 1z" fill="#fff" stroke="#0000c0" stroke-width="1.300"/><path d="M9 3v10" stroke="#00c000" stroke-width="1.500"/></svg>
<svg class="a" style="left:694px;top:109px" width="16" height="16" viewBox="0 0 16 16"><ellipse cx="8" cy="3.500" rx="4.500" ry="2.500" fill="#fff" stroke="#0000c0" stroke-width="1.300"/><path d="M3.500 3.500v9c0 3 9 3 9 0v-9" fill="#fff" stroke="#0000c0" stroke-width="1.300"/><path d="M8 6v9" stroke="#00c000" stroke-width="2.500"/></svg>
<svg class="a" style="left:716px;top:109px" width="16" height="16" viewBox="0 0 16 16"><ellipse cx="5" cy="12" rx="4.500" ry="2.500" fill="none" stroke="#404040" stroke-width="1.200"/><path d="M3 2l11 4v9l-11-4z" fill="#fff" stroke="#0000c0" stroke-width="1.300"/><path d="M5 5l8 3v2l-8-3z" fill="#00c000"/></svg>
<svg class="a" style="left:739px;top:109px" width="16" height="16" viewBox="0 0 16 16"><path d="M1 15c0-7 4-12 11-13" fill="none" stroke="#6080c0" stroke-width="1.500"/><path d="M5 15c0-6 3-9 9-10" fill="none" stroke="#00a000" stroke-width="2"/><path d="M9 15c0-4 2-6 6-7" fill="none" stroke="#6080c0" stroke-width="1.500"/></svg>
<svg class="a" style="left:761px;top:109px" width="16" height="16" viewBox="0 0 16 16"><rect x="1" y="1" width="14" height="14" fill="#fff" stroke="#008000" stroke-width="2"/><rect x="3.500" y="3.500" width="5" height="5" fill="none" stroke="#000080" stroke-width="1.200"/><path d="M8 12.500h4.500v-5z" fill="none" stroke="#000080"/></svg>
<svg class="a" style="left:782px;top:109px" width="16" height="16" viewBox="0 0 16 16"><path d="M5 1h10" stroke="#ff00ff" stroke-width="2"/><path d="M1 9l5-7" stroke="#0000c0" stroke-width="1.500"/><path d="M1 15l6-6h8" fill="none" stroke="#00a000" stroke-width="2"/><path d="M10 2v5M8 5l2 3 2-3z" stroke="#000" fill="#000"/></svg>
<svg class="a" style="left:805px;top:109px" width="16" height="16" viewBox="0 0 16 16"><path d="M0 7.500h16" stroke="#000"/><rect x="4.500" y="1.500" width="7" height="4" rx="1.500" fill="none" stroke="#00a000" stroke-width="2"/><rect x="4.500" y="9.500" width="7" height="5" rx="1.500" fill="none" stroke="#00a000" stroke-width="2"/><path d="M0 9.500h16" stroke="#4060c0"/></svg>
<svg class="a" style="left:865px;top:109px" width="16" height="16" viewBox="0 0 16 16"><path d="M3 5c3 1 5-2 10-1l-2 8c-4-1-6 2-9 1z" fill="#40d040" stroke="#000080" stroke-width="1.200"/><path d="M2 3c1-2 3-2 5-1" fill="none" stroke="#000"/><path d="M8 1l-1 3-2-2z" fill="#000"/></svg>
<svg class="a" style="left:887px;top:109px" width="16" height="16" viewBox="0 0 16 16"><path d="M1 4c2 1 3-1 5-1l-1 10c-2 0-3 2-5 1z" fill="#40d040" stroke="#000080" stroke-width="1.200"/><path d="M8 3c2 1 4-1 7-1l-2 10c-3 0-4 2-6 1z" fill="#40d040" stroke="#000080" stroke-width="1.200"/></svg>
<svg class="a" style="left:909px;top:109px" width="16" height="16" viewBox="0 0 16 16"><path d="M1 13l3-9 6-2 5 10-4-3z" fill="#40d040" stroke="#000080" stroke-width="1.500"/></svg>
<svg class="a" style="left:931px;top:109px" width="16" height="16" viewBox="0 0 16 16"><path d="M1 5l4-4 3 7-3 4z" fill="#40d040" stroke="#000080" stroke-width="1.200"/><path d="M5 12l3-4 7 2-4 5z" fill="#40d040" stroke="#000080" stroke-width="1.200"/></svg>
<svg class="a" style="left:952px;top:109px" width="16" height="16" viewBox="0 0 16 16"><path d="M1 5l5-3v9l-5 3z" fill="#40d040" stroke="#000"/><path d="M6 2l6 2v9l-6-2z" fill="#fff" stroke="#000"/><path d="M8 6c2-3 6-2 7 0v8h-4v-6" fill="#c0c0c0" stroke="#000"/></svg>
<svg class="a" style="left:974px;top:109px" width="16" height="16" viewBox="0 0 16 16"><path d="M3 5l3-4h9l-3 4z" fill="#40d040" stroke="#008000"/><path d="M1 15l3-4h9l-3 4z" fill="#4060ff" stroke="#000080"/><path d="M8 5v7M2 8.500h12" stroke="#000" stroke-width="1.300"/><path d="M8 4l-2 3h4z" fill="#000"/></svg>
<svg class="a" style="left:996px;top:109px" width="16" height="16" viewBox="0 0 16 16"><path d="M1 2h14l-3 7h-8z" fill="#40d040" stroke="#004000" stroke-width="1.300"/><path d="M4 4h8l-1 3h-6z" fill="#008000"/><ellipse cx="8" cy="12" rx="3.500" ry="2.500" fill="#fff" stroke="#000" stroke-width="1.300"/></svg>
<div class="a sep" style="left:1017px;top:107px;height:20px"></div>
<svg class="a" style="left:1025px;top:109px" width="16" height="16" viewBox="0 0 16 16"><path d="M1 1c2 0 4 2 7 4 3-2 5-4 7-4v10c-2 1-4 2-7 4-3-2-5-3-7-4z" fill="#fff" stroke="#000080" stroke-width="1.300"/><path d="M8 5v10" stroke="#000080"/><path d="M5 6l3 2 3-2M5 9l3 2 3-2M5 12l3 2 3-2" fill="none" stroke="#00a000" stroke-width="1.300"/></svg>
<svg class="a" style="left:1047px;top:109px" width="16" height="16" viewBox="0 0 16 16"><path d="M1 1c2 0 3 2 5 4v10c-2-2-3-3-5-4zM15 1c-2 0-3 2-5 4v10c2-2 3-3 5-4z" fill="#fff" stroke="#000080" stroke-width="1.300"/><path d="M8 4v11M3 6v5M13 6v5" stroke="#00a000" stroke-width="1.300"/></svg>
<div class="a sep" style="left:1068px;top:107px;height:20px"></div>
<svg class="a" style="left:1074px;top:109px" width="16" height="16" viewBox="0 0 16 16"><circle cx="2.500" cy="6" r="1.800" fill="none" stroke="#000" stroke-width="1.100"/><circle cx="2.500" cy="11" r="1.800" fill="none" stroke="#000" stroke-width="1.100"/><path d="M4 7l7 3M4 10l7-3" stroke="#000" stroke-width="1.100"/><path d="M7 1h7l-3 4h-7z" fill="#4060ff" stroke="#000080" stroke-width=".800"/><path d="M8 11h7l-3 4h-7z" fill="#4060ff" stroke="#000080" stroke-width=".800"/></svg>
<svg class="a" style="left:1096px;top:109px" width="16" height="16" viewBox="0 0 16 16"><circle cx="2.500" cy="6" r="1.800" fill="none" stroke="#000" stroke-width="1.100"/><circle cx="2.500" cy="11" r="1.800" fill="none" stroke="#000" stroke-width="1.100"/><path d="M4 7l7 3M4 10l7-3" stroke="#000" stroke-width="1.100"/><path d="M7 1h7l-3 4h-7z" fill="#4060ff" stroke="#000080" stroke-width=".800"/><path d="M8 11h7l-3 4h-7z" fill="#ff8060" stroke="#c02000" stroke-width=".800"/></svg>
<div class="a sep" style="left:1118px;top:107px;height:20px"></div>
<svg class="a" style="left:1125px;top:109px" width="16" height="16" viewBox="0 0 16 16"><rect x="0.500" y="0.500" width="15" height="15" fill="#fff" stroke="#000" stroke-dasharray="2 1.500" stroke-width="1.300"/><rect x="5.500" y="5.500" width="5" height="5" fill="#60a0ff" stroke="#0000c0"/><path d="M8 2v3M8 11v3M2 8h3M11 8h3" stroke="#000" stroke-width="1.300"/></svg>
<svg class="a" style="left:1147px;top:109px" width="16" height="16" viewBox="0 0 16 16"><rect x="0.500" y="0.500" width="13" height="13" fill="#fff" stroke="#000" stroke-dasharray="2 1.500" stroke-width="1.300"/><rect x="4.500" y="4.500" width="5" height="5" fill="#60a0ff" stroke="#0000c0"/><path d="M8 14l6-9 2 1.500-6 9z" fill="#f0c020" stroke="#a04000" stroke-width=".700"/></svg>
<svg class="a" style="left:1168px;top:109px" width="16" height="16" viewBox="0 0 16 16"><path d="M1 4l5-3 4 3 5-2-4 5-4-2z" fill="#6080e0" stroke="#000080" stroke-width=".800"/><path d="M1 11c3-3 5 3 8 0s4-2 6-1l-2 4c-3-2-4 2-7 1s-3-2-5 0z" fill="#20c020" stroke="#004000" stroke-width="1.200"/><path d="M12 5v4M10.500 8l1.500 2 1.500-2z" stroke="#000" fill="#000"/></svg>
<svg class="a" style="left:1190px;top:109px" width="16" height="16" viewBox="0 0 16 16"><path d="M2 6l3-5 3 7-3 5z" fill="#4060e0" stroke="#000080"/><path d="M5 13l3-5 7-2-4 7z" fill="#20c020" stroke="#006000"/><path d="M6 15l9-9" stroke="#e00000" stroke-width="1.800"/></svg>
<svg class="a" style="left:1211px;top:109px" width="16" height="16" viewBox="0 0 16 16"><path d="M1 3l4-1 3 3 3-3 4 1-4 5v6h-6v-6z" fill="#20c020" stroke="#004000" stroke-width="1.200"/><path d="M6 9h4v4h-4z" fill="#fff" stroke="#004000" stroke-width=".800"/></svg>
<svg class="a" style="left:1234px;top:109px" width="16" height="16" viewBox="0 0 16 16"><path d="M4 1h11l-4 5h-11z" fill="none" stroke="#ff00ff" stroke-width="1.400"/><path d="M3 8l3-3 9 1-2 5 2 3-9 1-5-3z" fill="#20c020" stroke="#004000" stroke-width="1.200"/><path d="M5 10h6l-1 3h-4z" fill="#fff" stroke="#004000" stroke-width=".800"/></svg>
<!-- panels -->
<div class="a" style="left:14px;top:130px;width:68px;height:638px;border-right:1px solid #9d9da1;border-top:1px solid #fff"></div>
<div class="a" style="left:17px;top:134px;width:63px;height:2px;border-top:1px solid #fff;border-bottom:1px solid #9d9da1"></div>
<div class="a" style="left:16px;top:210px;width:65px;height:2px;border-top:1px solid #9d9da1;border-bottom:1px solid #fff"></div>
<div class="a" style="left:16px;top:318px;width:65px;height:2px;border-top:1px solid #9d9da1;border-bottom:1px solid #fff"></div>
<div class="a" style="left:16px;top:427px;width:65px;height:2px;border-top:1px solid #9d9da1;border-bottom:1px solid #fff"></div>
<div class="a" style="left:16px;top:546px;width:65px;height:2px;border-top:1px solid #9d9da1;border-bottom:1px solid #fff"></div>
<svg class="a" style="left:39px;top:142px" width="18" height="18" viewBox="0 0 16 16"><path d="M1.5 4.5h8v9h-8z" fill="#d8d8dc" stroke="#000090"/><path d="M1.5 4.5l3 -3h8l-3 3z" fill="#fff" stroke="#000090"/><path d="M9.5 4.5l3 -3v9l-3 3z" fill="#a0a0a8" stroke="#000090"/><path d="M6.5 9.5h6v5h-6z" fill="#60ff60" stroke="#008000"/><path d="M6.5 9.5l2 -2h6l-2 2z" fill="#20c820" stroke="#008000"/><path d="M12.5 9.5l2 -2v5l-2 2z" fill="#008000" stroke="#008000"/><path d="M12.500 0v7M9.500 1l6 5M15.500 1l-6 5" stroke="#ff8000" stroke-width="1.200"/><path d="M12.500 2v3M11 3.500h3" stroke="#ffff00"/></svg>
<div class="a cn" style="left:14px;top:159px;width:68px;text-align:center;height:12px;line-height:12px">新建拉伸</div>
<svg class="a" style="left:39px;top:176px" width="18" height="18" viewBox="0 0 16 16"><path d="M3.5 4.5h8v9h-8z" fill="#d8d8dc" stroke="#000090"/><path d="M3.5 4.5l3 -3h8l-3 3z" fill="#fff" stroke="#000090"/><path d="M11.5 4.5l3 -3v9l-3 3z" fill="#a0a0a8" stroke="#000090"/><path d="M1 10c0-3 4-4 7-3v-2l4 3-4 3v-2c-2 0-3 0-3 1s6 2 9 0v3c-4 3-13 1-13-3z" fill="#20c820" stroke="#008000" stroke-width=".800"/><path d="M12.500 0v7M9.500 1l6 5M15.500 1l-6 5" stroke="#ff8000" stroke-width="1.200"/><path d="M12.500 2v3M11 3.500h3" stroke="#ffff00"/></svg>
<div class="a cn" style="left:14px;top:193px;width:68px;text-align:center;height:12px;line-height:12px">新建旋转</div>
<svg class="a" style="left:39px;top:216px" width="18" height="18" viewBox="0 0 16 16"><path d="M1.500 1.500h9l4 7v5h-9l-4-7z" fill="#fff" stroke="#000090" stroke-width="1.300"/><path d="M3.500 3.500h6l2.500 4.500h-6z" fill="#20c820" stroke="#008000"/><path d="M5.500 8.500h9" stroke="#000090"/></svg>
<div class="a cn" style="left:14px;top:233px;width:68px;text-align:center;height:12px;line-height:12px">抽壳</div>
<svg class="a" style="left:39px;top:250px" width="18" height="18" viewBox="0 0 16 16"><path d="M1.5 4.5h8v9h-8z" fill="#d8d8dc" stroke="#000090"/><path d="M1.5 4.5l3 -3h8l-3 3z" fill="#fff" stroke="#000090"/><path d="M9.5 4.5l3 -3v9l-3 3z" fill="#a0a0a8" stroke="#000090"/><path d="M6.5 9.5h6v5h-6z" fill="#60ff60" stroke="#008000"/><path d="M6.5 9.5l2 -2h6l-2 2z" fill="#20c820" stroke="#008000"/><path d="M12.5 9.5l2 -2v5l-2 2z" fill="#008000" stroke="#008000"/></svg>
<div class="a cn" style="left:14px;top:267px;width:68px;text-align:center;height:12px;line-height:12px">增加拉伸</div>
<svg class="a" style="left:39px;top:285px" width="18" height="18" viewBox="0 0 16 16"><path d="M1.5 4.5h10v10h-10z" fill="#d8d8dc" stroke="#000090"/><path d="M1.5 4.5l3 -3h10l-3 3z" fill="#fff" stroke="#000090"/><path d="M11.5 4.5l3 -3v10l-3 3z" fill="#a0a0a8" stroke="#000090"/><rect x="4" y="7" width="6" height="6" fill="#fff" stroke="#000090"/><rect x="5.500" y="8.500" width="3" height="3" fill="#20c820"/></svg>
<div class="a cn" style="left:14px;top:302px;width:68px;text-align:center;height:12px;line-height:12px">移除拉伸</div>
<svg class="a" style="left:39px;top:325px" width="18" height="18" viewBox="0 0 16 16"><path d="M1.500 14.500v-7c0-4 3-6 7-6h2l4 4v9z" fill="#fff" stroke="#000090" stroke-width="1.300"/><path d="M1.500 8c0-4 3-6.500 7-6.500h2l3 3.500c-5 0-8 2-8 7z" fill="#20c820" stroke="#008000"/></svg>
<div class="a cn" style="left:14px;top:342px;width:68px;text-align:center;height:12px;line-height:12px">圆角</div>
<svg class="a" style="left:39px;top:359px" width="18" height="18" viewBox="0 0 16 16"><path d="M1.500 14.500v-6l7-7h2l4 4v9z" fill="#fff" stroke="#000090" stroke-width="1.300"/><path d="M1.500 8.500l7-7h2l3 3.500-7 7z" fill="#20c820" stroke="#008000"/></svg>
<div class="a cn" style="left:14px;top:376px;width:68px;text-align:center;height:12px;line-height:12px">斜角</div>
<svg class="a" style="left:39px;top:393px" width="18" height="18" viewBox="0 0 16 16"><path d="M1.5 4.5h9v10h-9z" fill="#d8d8dc" stroke="#000090"/><path d="M1.5 4.5l3 -3h9l-3 3z" fill="#fff" stroke="#000090"/><path d="M10.5 4.5l3 -3v10l-3 3z" fill="#a0a0a8" stroke="#000090"/><path d="M3 13l2-9 3 0 2 9z" fill="#20c820" stroke="#008000"/><path d="M8 8h5M11 6l2 2-2 2" fill="none" stroke="#000"/></svg>
<div class="a cn" style="left:14px;top:410px;width:68px;text-align:center;height:12px;line-height:12px">拔模</div>
<svg class="a" style="left:39px;top:432px" width="18" height="18" viewBox="0 0 16 16"><path d="M0.5 4.5h4v9h-4z" fill="#6080e0" stroke="#000090"/><path d="M0.5 4.5l2 -2h4l-2 2z" fill="#a0b0ff" stroke="#000090"/><path d="M4.5 4.5l2 -2v9l-2 2z" fill="#4050b0" stroke="#000090"/><path d="M9.5 4.5h4v9h-4z" fill="#d8d8dc" stroke="#000090"/><path d="M9.5 4.5l2 -2h4l-2 2z" fill="#fff" stroke="#000090"/><path d="M13.5 4.5l2 -2v9l-2 2z" fill="#a0a0a8" stroke="#000090"/><path d="M5.500 0.500l3 1v12l-3-1z" fill="#20c820" stroke="#008000"/></svg>
<div class="a cn" style="left:14px;top:449px;width:68px;text-align:center;height:12px;line-height:12px">根据物体分</div>
<div class="a cn" style="left:14px;top:461px;width:68px;text-align:center;height:12px;line-height:12px">割</div>
<svg class="a" style="left:39px;top:478px" width="18" height="18" viewBox="0 0 16 16"><path d="M1.5 4.5h9v10h-9z" fill="#d0d8ff" stroke="#000090"/><path d="M1.5 4.5l3 -3h9l-3 3z" fill="#fff" stroke="#000090"/><path d="M10.5 4.5l3 -3v10l-3 3z" fill="#8090d0" stroke="#000090"/><path d="M7 1l-3 5 4 3-3 5" fill="none" stroke="#008000" stroke-width="1.600"/></svg>
<div class="a cn" style="left:14px;top:495px;width:68px;text-align:center;height:12px;line-height:12px">合并</div>
<svg class="a" style="left:39px;top:512px" width="18" height="18" viewBox="0 0 16 16"><path d="M1.5 4.5h5v9h-5z" fill="#6080e0" stroke="#000090"/><path d="M1.5 4.5l2 -2h5l-2 2z" fill="#a0b0ff" stroke="#000090"/><path d="M6.5 4.5l2 -2v9l-2 2z" fill="#4050b0" stroke="#000090"/><path d="M7.5 4.5h5v10h-5z" fill="#fff" stroke="#c03000"/><path d="M7.5 4.5l3 -3h5l-3 3z" fill="#ffd0c0" stroke="#c03000"/><path d="M12.5 4.5l3 -3v10l-3 3z" fill="#e08060" stroke="#c03000"/><path d="M8 2l-3 4 4 3-3 5" fill="none" stroke="#008000" stroke-width="1.600"/></svg>
<div class="a cn" style="left:14px;top:529px;width:68px;text-align:center;height:12px;line-height:12px">切除</div>
<svg class="a" style="left:39px;top:551px" width="18" height="18" viewBox="0 0 16 16"><circle cx="5" cy="4.500" r="3.500" fill="#e00000" stroke="#900000"/><path d="M3 4.500h4" stroke="#fff" stroke-width="1.300"/><path d="M8.5 8.5h5v6h-5z" fill="#d8d8dc" stroke="#808080"/><path d="M8.5 8.5l2 -2h5l-2 2z" fill="#fff" stroke="#808080"/><path d="M13.5 8.5l2 -2v6l-2 2z" fill="#a0a0a8" stroke="#808080"/></svg>
<div class="a cn" style="left:14px;top:568px;width:68px;text-align:center;height:12px;line-height:12px">取消激活的</div>
<div class="a cn" style="left:14px;top:580px;width:68px;text-align:center;height:12px;line-height:12px">物体</div>
<svg class="a" style="left:39px;top:598px" width="18" height="18" viewBox="0 0 16 16"><path d="M1 5l3 4 6-8" fill="none" stroke="#008000" stroke-width="2"/><path d="M7.5 8.5h5v6h-5z" fill="#80c080" stroke="#408040"/><path d="M7.5 8.5l2 -2h5l-2 2z" fill="#a0e0a0" stroke="#408040"/><path d="M12.5 8.5l2 -2v6l-2 2z" fill="#609060" stroke="#408040"/></svg>
<div class="a cn" style="left:14px;top:615px;width:68px;text-align:center;height:12px;line-height:12px">激活物体</div>
<svg class="a" style="left:39px;top:632px" width="18" height="18" viewBox="0 0 16 16"><path d="M1.500 6.500h9v8h-9z M1.500 6.500l4-3h9v8l-4 3" fill="#fff" stroke="#000090" stroke-width="1.200"/><path d="M3 9c0-5 4-7 9-7v4c-3 0-5 1-5 4z" fill="#20c820" stroke="#008000"/></svg>
<div class="a cn" style="left:14px;top:649px;width:68px;text-align:center;height:12px;line-height:12px">增加管道</div>
<svg class="a" style="left:39px;top:666px" width="18" height="18" viewBox="0 0 16 16"><path d="M1.500 6.500h9v8h-9z M1.500 6.500l4-3h9v8l-4 3" fill="#fff" stroke="#000090" stroke-width="1.200"/><path d="M3 10c0-5 4-7 9-7v4c-3 0-5 0-5 3z" fill="#008000" stroke="#004000"/><path d="M10.500 6.500v8" stroke="#000090"/></svg>
<div class="a cn" style="left:14px;top:683px;width:68px;text-align:center;height:12px;line-height:12px">删除管道</div>
<svg class="a" style="left:39px;top:700px" width="18" height="18" viewBox="0 0 16 16"><path d="M6 1.500l5 8-4 4.500-3-9z" fill="#20c820" stroke="#008000"/><path d="M7 14l4-4.500 4 1.500-4 4z" fill="#d0d0d0" stroke="#606060" stroke-width=".800"/><path d="M2.500 6c-1-3 0-4 2-4.500" fill="none" stroke="#000"/><path d="M1 4.500l2 2.500 1-2.500z" fill="#000"/></svg>
<div class="a cn" style="left:14px;top:717px;width:68px;text-align:center;height:12px;line-height:12px">折弯</div>
<svg class="a" style="left:20px;top:758px" width="5" height="7"><path d="M4 0v6l-3.500-3z" fill="#000"/></svg>
<svg class="a" style="left:73px;top:757px" width="7" height="9"><path d="M0.500 0.500l3 3 3-3M0.500 4.500l3 3 3-3" fill="none" stroke="#000" stroke-width="1.300"/></svg>
<div class="a" style="left:84px;top:133px;width:199px;height:16px;border:1px solid;border-color:#fff #9d9da1 #9d9da1 #fff"></div>
<div class="a cn" style="left:88px;top:135px;height:12px;line-height:12px"><span class="l">Features</span></div>
<svg class="a" style="left:254px;top:134px" width="9" height="12"><path d="M2 0.500h5M2.500 0.500v5M5.500 0.500v5.500M6.500 0.500v5M0.500 6h8M4.500 6.500v4.500" fill="none" stroke="#000" stroke-width="1"/></svg>
<svg class="a" style="left:269px;top:136px" width="9" height="9"><path d="M1 1l7 7M8 1l-7 7" stroke="#000" stroke-width="1.600"/></svg>
<div class="a" style="left:86px;top:152px;width:197px;height:575px;background:#fff;border:1px solid;border-color:#9d9da1 #716f64 #716f64 #9d9da1;border-right-width:2px;border-bottom-width:2px;box-shadow:inset -1px -1px 0 #d4d4d8"></div>
<div class="a" style="left:87px;top:153px;width:193px;height:19px;background:#e0dfe3"></div>
<div class="a" style="left:88px;top:154px;width:184px;height:18px;background:#e0dfe3;border:1px solid;border-color:#fff #9d9da1 #9d9da1 #fff"></div>
<div class="a cn" style="left:93px;top:157px;height:12px;line-height:12px">名称</div>
<div class="a" style="left:104px;top:182px;width:1px;height:180px;background:#c8c8c8"></div>
<div class="a" style="left:105px;top:182px;width:9px;height:1px;background:#c8c8c8"></div>
<div class="a" style="left:100px;top:177px;width:11px;height:11px;background:#fff;border:1px solid #c0c0c0"></div><div class="a" style="left:103px;top:182px;width:5px;height:1px;background:#000"></div><div class="a" style="left:105px;top:180px;width:1px;height:5px;background:#000"></div>
<svg class="a" style="left:125px;top:174px" width="16" height="16" viewBox="0 0 16 16"><circle cx="4.500" cy="4" r="3" fill="#90d070" stroke="#000"/><path d="M9 9l3.500-6 3.500 6z" fill="#ffe040" stroke="#000" stroke-width=".800"/><rect x="1.500" y="10.500" width="6" height="4" rx="1.500" fill="#f0a0e0" stroke="#000"/></svg>
<div class="a cn" style="left:145px;top:176px;height:12px;line-height:12px">图素</div>
<div class="a" style="left:105px;top:200px;width:9px;height:1px;background:#c8c8c8"></div>
<svg class="a" style="left:125px;top:192px" width="16" height="16" viewBox="0 0 16 16"><path d="M3.500 2.500h9v11h-9z" fill="none" stroke="#ff00ff" stroke-width="1.300"/><path d="M8 0v16M0 8h16" stroke="#ff00ff"/><path d="M6 5v6h4v-6" fill="none" stroke="#ff00ff"/></svg>
<div class="a cn" style="left:145px;top:194px;height:12px;line-height:12px">主平面<span class="l">11</span></div>
<div class="a" style="left:105px;top:218px;width:9px;height:1px;background:#c8c8c8"></div>
<div class="a" style="left:100px;top:213px;width:11px;height:11px;background:#fff;border:1px solid #c0c0c0"></div><div class="a" style="left:103px;top:218px;width:5px;height:1px;background:#000"></div><div class="a" style="left:105px;top:216px;width:1px;height:5px;background:#000"></div>
<svg class="a" style="left:125px;top:210px" width="16" height="16" viewBox="0 0 16 16"><path d="M1.5 4.5h8v9h-8z" fill="#d8d8dc" stroke="#000090"/><path d="M1.5 4.5l3 -3h8l-3 3z" fill="#fff" stroke="#000090"/><path d="M9.5 4.5l3 -3v9l-3 3z" fill="#a0a0a8" stroke="#000090"/><path d="M6.5 9.5h6v5h-6z" fill="#60ff60" stroke="#008000"/><path d="M6.5 9.5l2 -2h6l-2 2z" fill="#20c820" stroke="#008000"/><path d="M12.5 9.5l2 -2v5l-2 2z" fill="#008000" stroke="#008000"/><path d="M12.500 0v7M9.500 1l6 5M15.500 1l-6 5" stroke="#ff8000" stroke-width="1.200"/><path d="M12.500 2v3M11 3.500h3" stroke="#ffff00"/></svg>
<div class="a cn" style="left:145px;top:212px;height:12px;line-height:12px">拉伸<span class="l">13</span></div>
<div class="a" style="left:105px;top:236px;width:9px;height:1px;background:#c8c8c8"></div>
<div class="a" style="left:100px;top:231px;width:11px;height:11px;background:#fff;border:1px solid #c0c0c0"></div><div class="a" style="left:103px;top:236px;width:5px;height:1px;background:#000"></div><div class="a" style="left:105px;top:234px;width:1px;height:5px;background:#000"></div>
<svg class="a" style="left:125px;top:228px" width="16" height="16" viewBox="0 0 16 16"><path d="M1.5 4.5h8v9h-8z" fill="#d8d8dc" stroke="#000090"/><path d="M1.5 4.5l3 -3h8l-3 3z" fill="#fff" stroke="#000090"/><path d="M9.5 4.5l3 -3v9l-3 3z" fill="#a0a0a8" stroke="#000090"/><path d="M6.5 9.5h6v5h-6z" fill="#60ff60" stroke="#008000"/><path d="M6.5 9.5l2 -2h6l-2 2z" fill="#20c820" stroke="#008000"/><path d="M12.5 9.5l2 -2v5l-2 2z" fill="#008000" stroke="#008000"/></svg>
<div class="a cn" style="left:145px;top:230px;height:12px;line-height:12px">增加拉伸<span class="l">15</span></div>
<div class="a" style="left:105px;top:254px;width:9px;height:1px;background:#c8c8c8"></div>
<svg class="a" style="left:125px;top:246px" width="16" height="16" viewBox="0 0 16 16"><path d="M1 7l4-5h10l-4 5z" fill="#fff" stroke="#ff00ff" stroke-width="1.200"/><path d="M1 15l4-5h10l-4 5z" fill="#d8d8d8" stroke="#008000" stroke-width="1.200"/></svg>
<div class="a cn" style="left:145px;top:248px;height:12px;line-height:12px">平行平面<span class="l">16</span></div>
<div class="a" style="left:105px;top:272px;width:9px;height:1px;background:#c8c8c8"></div>
<div class="a" style="left:100px;top:267px;width:11px;height:11px;background:#fff;border:1px solid #c0c0c0"></div><div class="a" style="left:103px;top:272px;width:5px;height:1px;background:#000"></div><div class="a" style="left:105px;top:270px;width:1px;height:5px;background:#000"></div>
<svg class="a" style="left:125px;top:264px" width="16" height="16" viewBox="0 0 16 16"><path d="M1.5 4.5h8v9h-8z" fill="#d8d8dc" stroke="#000090"/><path d="M1.5 4.5l3 -3h8l-3 3z" fill="#fff" stroke="#000090"/><path d="M9.5 4.5l3 -3v9l-3 3z" fill="#a0a0a8" stroke="#000090"/><path d="M6.5 9.5h6v5h-6z" fill="#60ff60" stroke="#008000"/><path d="M6.5 9.5l2 -2h6l-2 2z" fill="#20c820" stroke="#008000"/><path d="M12.5 9.5l2 -2v5l-2 2z" fill="#008000" stroke="#008000"/></svg>
<div class="a cn" style="left:145px;top:266px;height:12px;line-height:12px">增加拉伸<span class="l">18</span></div>
<div class="a" style="left:105px;top:290px;width:9px;height:1px;background:#c8c8c8"></div>
<div class="a" style="left:100px;top:285px;width:11px;height:11px;background:#fff;border:1px solid #c0c0c0"></div><div class="a" style="left:103px;top:290px;width:5px;height:1px;background:#000"></div><div class="a" style="left:105px;top:288px;width:1px;height:5px;background:#000"></div>
<svg class="a" style="left:125px;top:282px" width="16" height="16" viewBox="0 0 16 16"><path d="M1.5 4.5h10v10h-10z" fill="#d8d8dc" stroke="#000090"/><path d="M1.5 4.5l3 -3h10l-3 3z" fill="#fff" stroke="#000090"/><path d="M11.5 4.5l3 -3v10l-3 3z" fill="#a0a0a8" stroke="#000090"/><rect x="4" y="7" width="6" height="6" fill="#fff" stroke="#000090"/><rect x="5.500" y="8.500" width="3" height="3" fill="#20c820"/></svg>
<div class="a cn" style="left:145px;top:284px;height:12px;line-height:12px">切除拉伸<span class="l">20</span></div>
<div class="a" style="left:105px;top:308px;width:9px;height:1px;background:#c8c8c8"></div>
<svg class="a" style="left:125px;top:300px" width="16" height="16" viewBox="0 0 16 16"><rect x="1.500" y="6.500" width="6" height="7" fill="#fff" stroke="#008000" stroke-width="1.300"/><path d="M10 1v15" stroke="#0000ff" stroke-width="1.300" stroke-dasharray="3 1.500"/><path d="M12 5l3-3v8l-3 3z" fill="#c0ffc0" stroke="#008000"/></svg>
<div class="a cn" style="left:145px;top:302px;height:12px;line-height:12px">轴-相交<span class="l">30</span></div>
<div class="a" style="left:105px;top:326px;width:9px;height:1px;background:#c8c8c8"></div>
<svg class="a" style="left:125px;top:318px" width="16" height="16" viewBox="0 0 16 16"><path d="M1 11l6-7 8 5-6 5z" fill="#fff" stroke="#ff00ff" stroke-width="1.200"/><path d="M3 13l8-3" stroke="#008000"/></svg>
<div class="a cn" style="left:145px;top:320px;height:12px;line-height:12px">倾斜平面<span class="l">31</span></div>
<div class="a" style="left:105px;top:344px;width:9px;height:1px;background:#c8c8c8"></div>
<div class="a" style="left:100px;top:339px;width:11px;height:11px;background:#fff;border:1px solid #c0c0c0"></div><div class="a" style="left:103px;top:344px;width:5px;height:1px;background:#000"></div><div class="a" style="left:105px;top:342px;width:1px;height:5px;background:#000"></div>
<svg class="a" style="left:125px;top:336px" width="16" height="16" viewBox="0 0 16 16"><path d="M1.5 4.5h8v9h-8z" fill="#d8d8dc" stroke="#000090"/><path d="M1.5 4.5l3 -3h8l-3 3z" fill="#fff" stroke="#000090"/><path d="M9.5 4.5l3 -3v9l-3 3z" fill="#a0a0a8" stroke="#000090"/><path d="M6.5 9.5h6v5h-6z" fill="#60ff60" stroke="#008000"/><path d="M6.5 9.5l2 -2h6l-2 2z" fill="#20c820" stroke="#008000"/><path d="M12.5 9.5l2 -2v5l-2 2z" fill="#008000" stroke="#008000"/></svg>
<div class="a cn" style="left:145px;top:338px;height:12px;line-height:12px">增加拉伸<span class="l">33</span></div>
<div class="a" style="left:105px;top:362px;width:9px;height:1px;background:#c8c8c8"></div>
<div class="a" style="left:100px;top:357px;width:11px;height:11px;background:#fff;border:1px solid #c0c0c0"></div><div class="a" style="left:103px;top:362px;width:5px;height:1px;background:#000"></div><div class="a" style="left:105px;top:360px;width:1px;height:5px;background:#000"></div>
<svg class="a" style="left:113px;top:356px" width="10" height="12"><path d="M2 0v7h4" fill="none" stroke="#000080" stroke-width="2"/><path d="M5 3.500l4.500 3.500-4.500 3.500z" fill="#000080"/></svg>
<svg class="a" style="left:125px;top:354px" width="16" height="16" viewBox="0 0 16 16"><path d="M1.5 4.5h10v10h-10z" fill="#d8d8dc" stroke="#000090"/><path d="M1.5 4.5l3 -3h10l-3 3z" fill="#fff" stroke="#000090"/><path d="M11.5 4.5l3 -3v10l-3 3z" fill="#a0a0a8" stroke="#000090"/><rect x="4" y="7" width="6" height="6" fill="#fff" stroke="#000090"/><rect x="5.500" y="8.500" width="3" height="3" fill="#20c820"/></svg>
<div class="a cn" style="left:145px;top:356px;height:12px;line-height:12px">切除拉伸<span class="l">35</span></div>
<div class="a" style="left:144px;top:174px;width:126px;height:16px;border:1px dotted #000"></div>
<div class="a" style="left:134px;top:729px;width:47px;height:16px;border:1px solid;border-color:transparent #716f64 #716f64 #fff;border-radius:0 0 3px 3px"></div>
<div class="a" style="left:182px;top:729px;width:47px;height:16px;border:1px solid;border-color:transparent #716f64 #716f64 #fff;border-radius:0 0 3px 3px"></div>
<div class="a" style="left:85px;top:727px;width:49px;height:20px;background:#e0dfe3;border:1px solid;border-color:transparent #716f64 #716f64 #fff;border-radius:0 0 3px 3px"></div>
<div class="a cn" style="left:97px;top:731px;height:12px;line-height:12px">特征</div>
<div class="a cn" style="left:145px;top:731px;height:12px;line-height:12px">集合</div>
<div class="a cn" style="left:190px;top:731px;height:12px;line-height:12px"><span class="l">M</span>视图</div>
<div class="a cn" style="left:86px;top:754px;height:12px;line-height:12px">使用鼠标的左键调整缩放<span class="l">.</span></div>
<div class="a" style="left:469px;top:749px;width:182px;height:18px;border:1px solid;border-color:#9d9da1 #fff #fff #9d9da1"></div>
<div class="a" style="left:653px;top:749px;width:101px;height:18px;border:1px solid;border-color:#9d9da1 #fff #fff #9d9da1"></div>
<div class="a" style="left:757px;top:749px;width:101px;height:18px;border:1px solid;border-color:#9d9da1 #fff #fff #9d9da1"></div>
<div class="a" style="left:861px;top:749px;width:102px;height:18px;border:1px solid;border-color:#9d9da1 #fff #fff #9d9da1"></div>
<div class="a" style="left:965px;top:749px;width:202px;height:18px;border:1px solid;border-color:#9d9da1 #fff #fff #9d9da1"></div>
<div class="a" style="left:1169px;top:749px;width:67px;height:18px;border:1px solid;border-color:#9d9da1 #fff #fff #9d9da1"></div>
<div class="a cn" style="left:968px;top:754px;height:12px;line-height:12px"><span class="l">T6</span></div>
<div class="a cn" style="left:1172px;top:754px;height:12px;line-height:12px">单位<span class="l">:mm</span></div>
<svg class="a" style="left:1241px;top:754px" width="13" height="13"><path d="M12 1l-11 11M12 5l-7 7M12 9l-3 3" stroke="#9d9da1" stroke-width="1.300"/><path d="M13 1l-11 11M13 5l-7 7M13 9l-3 3" stroke="#fff" stroke-width=".800"/></svg>
<div class="a" style="left:10px;top:767px;width:1248px;height:2px;background:#fff"></div>
<!-- viewport -->
<div class="a" style="left:287px;top:130px;width:967px;height:617px;background:#fff;border:2px solid;border-color:#85837a #f6f5ec #f6f5ec #77756a;border-right-width:1px;border-bottom-width:1px"></div>
<svg class="a" style="left:0;top:0" width="1290" height="812" viewBox="0 0 1290 812" shape-rendering="crispEdges">
<defs><linearGradient id="g1" gradientUnits="userSpaceOnUse" x1="527.5" y1="0.0" x2="570.6" y2="0.0"><stop offset="0.000" stop-color="#6ff66f"/><stop offset="0.145" stop-color="#69e969"/><stop offset="0.283" stop-color="#64df64"/><stop offset="0.411" stop-color="#5fd45f"/><stop offset="0.528" stop-color="#5ac95a"/><stop offset="0.635" stop-color="#55bd55"/><stop offset="0.729" stop-color="#50b250"/><stop offset="0.810" stop-color="#4ba74b"/><stop offset="0.877" stop-color="#479e47"/><stop offset="0.930" stop-color="#439643"/><stop offset="0.969" stop-color="#418f41"/><stop offset="0.992" stop-color="#3f8b3f"/><stop offset="1.000" stop-color="#3d893d"/></linearGradient>
<linearGradient id="g2" gradientUnits="userSpaceOnUse" x1="518.1" y1="507.4" x2="781.3" y2="747.3"><stop offset="0.000" stop-color="#439643"/><stop offset="0.003" stop-color="#459945"/><stop offset="0.012" stop-color="#479e47"/><stop offset="0.028" stop-color="#4aa54a"/><stop offset="0.049" stop-color="#4dac4d"/><stop offset="0.075" stop-color="#51b451"/><stop offset="0.107" stop-color="#55bc55"/><stop offset="0.144" stop-color="#59c559"/><stop offset="0.186" stop-color="#5ccd5c"/><stop offset="0.231" stop-color="#5fd45f"/><stop offset="0.280" stop-color="#62da62"/><stop offset="0.332" stop-color="#64de64"/><stop offset="0.387" stop-color="#65e165"/><stop offset="0.443" stop-color="#65e165"/><stop offset="0.500" stop-color="#64df64"/><stop offset="0.558" stop-color="#62db62"/><stop offset="0.616" stop-color="#5fd45f"/><stop offset="0.673" stop-color="#5bcb5b"/><stop offset="0.729" stop-color="#56c056"/><stop offset="0.782" stop-color="#50b350"/><stop offset="0.833" stop-color="#4aa54a"/><stop offset="0.881" stop-color="#439643"/><stop offset="0.925" stop-color="#3c863c"/><stop offset="0.965" stop-color="#367736"/><stop offset="1.000" stop-color="#316c31"/></linearGradient>
<linearGradient id="g3" gradientUnits="userSpaceOnUse" x1="858.5" y1="554.9" x2="805.2" y2="473.6"><stop offset="0.000" stop-color="#295c29"/><stop offset="0.004" stop-color="#295c29"/><stop offset="0.017" stop-color="#295c29"/><stop offset="0.038" stop-color="#295c29"/><stop offset="0.067" stop-color="#306c30"/><stop offset="0.103" stop-color="#3a813a"/><stop offset="0.146" stop-color="#449844"/><stop offset="0.195" stop-color="#4faf4f"/><stop offset="0.250" stop-color="#58c558"/><stop offset="0.309" stop-color="#61d861"/><stop offset="0.371" stop-color="#69e969"/><stop offset="0.435" stop-color="#6ff66f"/><stop offset="0.500" stop-color="#72fe72"/><stop offset="0.565" stop-color="#73ff73"/><stop offset="0.629" stop-color="#73ff73"/><stop offset="0.691" stop-color="#72fc72"/><stop offset="0.750" stop-color="#6ef46e"/><stop offset="0.805" stop-color="#68e868"/><stop offset="0.854" stop-color="#62db62"/><stop offset="0.897" stop-color="#5ccc5c"/><stop offset="0.933" stop-color="#55bd55"/><stop offset="0.962" stop-color="#4fb04f"/><stop offset="0.983" stop-color="#4aa44a"/><stop offset="0.996" stop-color="#469a46"/><stop offset="1.000" stop-color="#439443"/></linearGradient>
<linearGradient id="g4" gradientUnits="userSpaceOnUse" x1="815.7" y1="489.7" x2="848.0" y2="538.9"><stop offset="0.000" stop-color="#295c29"/><stop offset="0.004" stop-color="#295c29"/><stop offset="0.017" stop-color="#295c29"/><stop offset="0.038" stop-color="#295c29"/><stop offset="0.067" stop-color="#306c30"/><stop offset="0.103" stop-color="#3a813a"/><stop offset="0.146" stop-color="#449844"/><stop offset="0.195" stop-color="#4faf4f"/><stop offset="0.250" stop-color="#58c558"/><stop offset="0.309" stop-color="#61d861"/><stop offset="0.371" stop-color="#69e969"/><stop offset="0.435" stop-color="#6ff66f"/><stop offset="0.500" stop-color="#72fe72"/><stop offset="0.565" stop-color="#73ff73"/><stop offset="0.629" stop-color="#73ff73"/><stop offset="0.691" stop-color="#72fc72"/><stop offset="0.750" stop-color="#6ef46e"/><stop offset="0.805" stop-color="#68e868"/><stop offset="0.854" stop-color="#62db62"/><stop offset="0.897" stop-color="#5ccc5c"/><stop offset="0.933" stop-color="#55bd55"/><stop offset="0.962" stop-color="#4fb04f"/><stop offset="0.983" stop-color="#4aa44a"/><stop offset="0.996" stop-color="#469a46"/><stop offset="1.000" stop-color="#439443"/></linearGradient>
<clipPath id="hc"><path d="M845.1 499.6 L847.0 502.0 L848.7 504.6 L850.2 507.3 L851.5 510.0 L852.6 512.8 L853.5 515.6 L854.1 518.4 L854.5 521.2 L854.7 523.9 L854.6 526.4 L854.2 528.9 L853.6 531.2 L852.8 533.3 L851.7 535.1 L850.4 536.8 L848.9 538.2 L847.3 539.4 L845.4 540.2 L843.4 540.8 L841.3 541.1 L839.1 541.1 L836.8 540.8 L834.4 540.3 L832.0 539.4 L829.6 538.2 L827.3 536.8 L824.9 535.2 L822.7 533.3 L820.6 531.2 L818.5 529.0 L816.7 526.5 L815.0 523.9 L813.5 521.3 L812.1 518.5 L811.0 515.7 L810.2 512.9 L809.5 510.1 L809.1 507.4 L809.0 504.7 L809.1 502.1 L809.5 499.7 L810.1 497.4 L810.9 495.3 L812.0 493.4 L813.2 491.7 L814.7 490.3 L816.4 489.2 L818.3 488.3 L820.3 487.7 L822.4 487.4 L824.6 487.4 L826.9 487.7 L829.3 488.3 L831.7 489.2 L834.1 490.3 L836.4 491.7 L838.7 493.4 L841.0 495.2 L843.1 497.3 L845.1 499.6Z"/></clipPath>
<linearGradient id="g5" gradientUnits="userSpaceOnUse" x1="971.9" y1="0.0" x2="1085.8" y2="0.0"><stop offset="0.000" stop-color="#295c29"/><stop offset="0.002" stop-color="#295c29"/><stop offset="0.010" stop-color="#295c29"/><stop offset="0.022" stop-color="#295c29"/><stop offset="0.039" stop-color="#295c29"/><stop offset="0.061" stop-color="#2c622c"/><stop offset="0.087" stop-color="#316e31"/><stop offset="0.118" stop-color="#387b38"/><stop offset="0.152" stop-color="#3e8a3e"/><stop offset="0.191" stop-color="#459945"/><stop offset="0.233" stop-color="#4ba84b"/><stop offset="0.279" stop-color="#52b752"/><stop offset="0.327" stop-color="#59c559"/><stop offset="0.378" stop-color="#5fd25f"/><stop offset="0.432" stop-color="#64df64"/><stop offset="0.487" stop-color="#69ea69"/><stop offset="0.544" stop-color="#6df36d"/><stop offset="0.602" stop-color="#70fa70"/><stop offset="0.660" stop-color="#73ff73"/><stop offset="0.719" stop-color="#73ff73"/><stop offset="0.777" stop-color="#73ff73"/><stop offset="0.835" stop-color="#73ff73"/><stop offset="0.891" stop-color="#72fe72"/><stop offset="0.947" stop-color="#70f970"/><stop offset="1.000" stop-color="#6ff66f"/></linearGradient></defs>
<path d="M530.8 602.1 L530.9 596.0 L531.4 590.1 L532.2 584.3 L533.4 578.6 L534.8 573.0 L536.6 567.7 L538.6 562.4 L541.0 557.4 L543.7 552.6 L546.7 548.0 L549.9 543.6 L553.5 539.5 L772.6 297.5 L769.1 301.6 L765.9 306.0 L762.9 310.6 L760.2 315.4 L757.8 320.4 L755.7 325.6 L754.0 331.0 L752.5 336.5 L751.4 342.2 L750.6 348.1 L750.1 354.0 L749.9 360.1Z" fill="#2b642b"/>
<path d="M530.8 602.1 L749.9 360.1" fill="none" stroke="#000" stroke-width="1"/>
<path d="M570.6 399.0 L570.5 397.0 L570.3 395.0 L569.8 393.0 L569.3 391.0 L568.5 389.1 L567.6 387.1 L566.5 385.2 L565.3 383.4 L563.9 381.5 L562.4 379.7 L560.7 377.9 L558.9 376.2 L557.0 374.5 L554.9 372.9 L552.6 371.4 L550.3 369.8 L547.8 368.4 L545.2 367.0 L542.5 365.7 L539.7 364.5 L536.8 363.3 L533.8 362.2 L530.7 361.2 L527.5 360.3 L527.5 401.0 L530.7 402.0 L533.8 403.0 L536.8 404.1 L539.7 405.2 L542.5 406.5 L545.2 407.8 L547.8 409.2 L550.3 410.6 L552.6 412.1 L554.9 413.7 L557.0 415.3 L558.9 417.0 L560.7 418.7 L562.4 420.5 L563.9 422.3 L565.3 424.1 L566.5 426.0 L567.6 427.9 L568.5 429.9 L569.3 431.8 L569.8 433.8 L570.3 435.8 L570.5 437.8 L570.6 439.8Z" fill="url(#g1)"/>
<path d="M527.5 401.0 L530.7 402.0 L533.8 403.0 L536.8 404.1 L539.7 405.2 L542.5 406.5 L545.2 407.8 L547.8 409.2 L550.3 410.6 L552.6 412.1 L554.9 413.7 L557.0 415.3 L558.9 417.0 L560.7 418.7 L562.4 420.5 L563.9 422.3 L565.3 424.1 L566.5 426.0 L567.6 427.9 L568.5 429.9 L569.3 431.8 L569.8 433.8 L570.3 435.8 L570.5 437.8 L570.6 439.8" fill="none" stroke="#000" stroke-width="1"/>
<path d="M527.5 360.3 L527.5 401.0" fill="none" stroke="#000" stroke-width="1"/>
<path d="M404.4 496.3 L456.7 438.5 L461.4 439.7 L466.2 440.7 L471.1 441.5 L476.1 442.2 L481.1 442.7 L486.2 443.0 L491.3 443.1 L496.5 443.0 L501.6 442.7 L506.7 442.3 L511.7 441.6 L516.6 440.8 L521.4 439.8 L526.1 438.6 L530.7 437.3 L535.1 435.8 L539.3 434.1 L543.3 432.3 L547.1 430.4 L550.6 428.3 L553.9 426.1 L556.9 423.8 L559.7 421.4 L562.2 418.9 L564.3 416.3 L566.2 413.6 L567.7 410.9 L568.9 408.1 L569.8 405.3 L570.4 402.4 L570.6 399.6 L570.5 396.7 L570.0 393.8 L569.2 391.0 L568.1 388.2 L566.7 385.5 L564.9 382.8 L562.9 380.2 L560.5 377.7 L557.8 375.2 L554.9 372.9 L551.6 370.7 L548.2 368.6 L544.5 366.6 L540.5 364.8 L536.4 363.1 L532.0 361.6 L527.5 360.3 L579.9 302.5 L690.7 333.3 L515.3 527.1Z" fill="#61df61"/>
<path d="M690.7 333.3 L579.9 302.5 L527.5 360.3 L532.0 361.6 L536.4 363.1 L540.5 364.8 L544.5 366.6 L548.2 368.6 L551.6 370.7 L554.9 372.9 L557.8 375.2 L560.5 377.7 L562.9 380.2 L564.9 382.8 L566.7 385.5 L568.1 388.2 L569.2 391.0 L570.0 393.8 L570.5 396.7 L570.6 399.6 L570.4 402.4 L569.8 405.3 L568.9 408.1 L567.7 410.9 L566.2 413.6 L564.3 416.3 L562.2 418.9 L559.7 421.4 L556.9 423.8 L553.9 426.1 L550.6 428.3 L547.1 430.4 L543.3 432.3 L539.3 434.1 L535.1 435.8 L530.7 437.3 L526.1 438.6 L521.4 439.8 L516.6 440.8 L511.7 441.6 L506.7 442.3 L501.6 442.7 L496.5 443.0 L491.3 443.1 L486.2 443.0 L481.1 442.7 L476.1 442.2 L471.1 441.5 L466.2 440.7 L461.4 439.7 L456.7 438.5 L404.4 496.3 L515.3 527.1" fill="none" stroke="#000" stroke-width="1"/>
<path d="M404.4 496.3 L404.4 537.0 L509.7 566.3 L509.9 558.2 L510.6 550.3 L511.7 542.4 L513.3 534.7 L515.3 527.1Z" fill="#6ff66f"/>
<path d="M404.4 496.3 L404.4 537.0 L509.7 566.3 L509.9 558.2 L510.6 550.3 L511.7 542.4 L513.3 534.7 L515.3 527.1Z" fill="none" stroke="#000" stroke-width="1"/>
<path d="M518.2 507.3 L522.5 502.8 L527.0 498.7 L531.8 494.7 L536.8 491.1 L542.0 487.6 L547.4 484.5 L553.1 481.7 L558.9 479.1 L565.0 476.8 L571.2 474.8 L577.6 473.1 L584.1 471.7 L590.7 470.6 L597.5 469.8 L604.4 469.3 L611.5 469.1 L618.6 469.2 L625.7 469.6 L633.0 470.3 L640.3 471.4 L647.6 472.7 L655.0 474.3 L662.4 476.2 L669.8 478.4 L677.1 480.9 L684.5 483.7 L691.7 486.8 L699.0 490.1 L706.2 493.7 L713.3 497.6 L720.3 501.7 L727.2 506.1 L734.0 510.7 L740.6 515.5 L747.1 520.5 L753.5 525.8 L759.7 531.3 L765.7 536.9 L771.5 542.8 L777.2 548.8 L782.6 555.0 L787.8 561.3 L792.8 567.8 L797.6 574.4 L802.1 581.1 L806.3 587.9 L810.3 594.8 L814.1 601.8 L817.5 608.8 L820.7 615.9 L823.6 623.1 L826.2 630.2 L828.5 637.4 L830.5 644.6 L832.2 651.8 L833.6 659.0 L834.7 666.1 L835.5 673.1 L836.0 680.2 L836.1 687.1 L1055.3 445.1 L1055.1 438.1 L1054.7 431.1 L1053.9 424.0 L1052.8 416.9 L1051.4 409.8 L1049.7 402.6 L1047.7 395.4 L1045.4 388.2 L1042.8 381.0 L1039.9 373.9 L1036.7 366.8 L1033.2 359.7 L1029.5 352.8 L1025.5 345.9 L1021.2 339.0 L1016.7 332.3 L1012.0 325.7 L1007.0 319.3 L1001.8 312.9 L996.3 306.8 L990.7 300.7 L984.9 294.9 L978.9 289.2 L972.7 283.8 L966.3 278.5 L959.8 273.5 L953.1 268.6 L946.3 264.0 L939.4 259.7 L932.4 255.6 L925.3 251.7 L918.2 248.1 L910.9 244.8 L903.6 241.7 L896.3 238.9 L888.9 236.4 L881.5 234.2 L874.2 232.3 L866.8 230.7 L859.5 229.3 L852.2 228.3 L844.9 227.6 L837.7 227.2 L830.6 227.1 L823.6 227.3 L816.7 227.8 L809.9 228.6 L803.2 229.7 L796.7 231.1 L790.3 232.8 L784.1 234.8 L778.1 237.0 L772.3 239.6 L766.6 242.5 L761.2 245.6 L755.9 249.0 L750.9 252.7 L746.2 256.6 L741.6 260.8 L737.3 265.2Z" fill="url(#g2)"/>
<path d="M518.2 507.3 L737.3 265.2 L737.3 265.2 L741.6 260.8 L746.2 256.6 L750.9 252.7 L755.9 249.0 L761.2 245.6 L766.6 242.5 L772.3 239.6 L778.1 237.0 L784.1 234.8 L790.3 232.8 L796.7 231.1 L803.2 229.7 L809.9 228.6 L816.7 227.8 L823.6 227.3 L830.6 227.1 L837.7 227.2 L844.9 227.6 L852.2 228.3 L859.5 229.3 L866.8 230.7 L874.2 232.3 L881.5 234.2 L888.9 236.4 L896.3 238.9 L903.6 241.7 L910.9 244.8 L918.2 248.1 L925.3 251.7 L932.4 255.6 L939.4 259.7 L946.3 264.0 L953.1 268.6 L959.8 273.5 L966.3 278.5 L972.7 283.8 L978.9 289.2 L984.9 294.9 L990.7 300.7 L996.3 306.8 L1001.8 312.9 L1007.0 319.3 L1012.0 325.7 L1016.7 332.3 L1021.2 339.0 L1025.5 345.9 L1029.5 352.8 L1033.2 359.7 L1036.7 366.8 L1039.9 373.9 L1042.8 381.0 L1045.4 388.2 L1047.7 395.4 L1049.7 402.6 L1051.4 409.8 L1052.8 416.9 L1053.9 424.0 L1054.7 431.1 L1055.1 438.1 L1055.3 445.1 L836.1 687.1" fill="none" stroke="#000" stroke-width="1"/>
<path d="M488.1 590.2 L488.2 583.9 L488.6 577.6 L489.3 571.5 L490.2 565.4 L491.4 559.4 L492.9 553.6 L494.6 547.9 L496.6 542.4 L498.8 537.0 L501.3 531.7 L504.1 526.6 L507.1 521.7 L510.3 517.0 L513.7 512.5 L517.4 508.1 L521.3 504.0 L525.4 500.0 L529.8 496.3 L534.3 492.8 L539.1 489.5 L544.0 486.5 L549.1 483.6 L554.4 481.1 L559.8 478.7 L565.4 476.6 L571.2 474.8 L577.1 473.2 L583.1 471.9 L589.2 470.8 L595.5 470.0 L601.9 469.4 L608.3 469.1 L614.9 469.1 L621.5 469.3 L628.2 469.8 L634.9 470.6 L641.6 471.6 L648.4 472.9 L655.3 474.4 L662.1 476.2 L668.9 478.2 L675.8 480.5 L682.6 483.0 L689.3 485.7 L696.0 488.7 L702.7 492.0 L709.3 495.4 L715.9 499.1 L722.3 503.0 L728.7 507.1 L735.0 511.4 L741.1 515.9 L747.1 520.5 L753.0 525.4 L758.8 530.5 L764.4 535.7 L769.8 541.0 L775.1 546.5 L780.2 552.2 L785.1 558.0 L789.9 563.9 L794.4 570.0 L798.8 576.1 L802.9 582.3 L806.8 588.6 L810.5 595.0 L813.9 601.5 L817.1 608.0 L820.1 614.6 L822.9 621.2 L825.4 627.9 L827.6 634.5 L829.6 641.2 L831.3 647.8 L832.8 654.5 L834.0 661.1 L834.9 667.7 L835.6 674.2 L836.0 680.7 L836.1 687.1 L793.4 675.2 L793.3 670.4 L793.0 665.5 L792.5 660.5 L791.8 655.6 L790.9 650.6 L789.8 645.6 L788.5 640.5 L787.0 635.5 L785.3 630.5 L783.4 625.5 L781.4 620.5 L779.1 615.5 L776.7 610.6 L774.1 605.7 L771.3 600.9 L768.4 596.1 L765.2 591.4 L762.0 586.8 L758.5 582.2 L755.0 577.8 L751.2 573.4 L747.4 569.1 L743.4 565.0 L739.3 560.9 L735.1 557.0 L730.7 553.2 L726.3 549.5 L721.7 546.0 L717.1 542.6 L712.4 539.3 L707.6 536.2 L702.7 533.3 L697.7 530.5 L692.8 527.9 L687.7 525.5 L682.6 523.2 L677.5 521.2 L672.4 519.3 L667.3 517.5 L662.1 516.0 L656.9 514.7 L651.8 513.5 L646.7 512.6 L641.6 511.8 L636.5 511.2 L631.4 510.9 L626.5 510.7 L621.5 510.7 L616.6 510.9 L611.8 511.4 L607.1 512.0 L602.5 512.8 L597.9 513.8 L593.5 515.0 L589.1 516.4 L584.9 517.9 L580.8 519.7 L576.8 521.7 L573.0 523.8 L569.2 526.1 L565.7 528.6 L562.2 531.2 L559.0 534.0 L555.8 537.0 L552.9 540.1 L550.1 543.4 L547.5 546.8 L545.1 550.4 L542.8 554.1 L540.8 557.9 L538.9 561.9 L537.2 566.0 L535.7 570.2 L534.4 574.5 L533.3 578.9 L532.4 583.4 L531.7 587.9 L531.2 592.6 L530.9 597.3 L530.8 602.1Z" fill="#6ff66f"/>
<path d="M488.1 590.2 L488.2 583.9 L488.6 577.6 L489.3 571.5 L490.2 565.4 L491.4 559.4 L492.9 553.6 L494.6 547.9 L496.6 542.4 L498.8 537.0 L501.3 531.7 L504.1 526.6 L507.1 521.7 L510.3 517.0 L513.7 512.5 L517.4 508.1 L521.3 504.0 L525.4 500.0 L529.8 496.3 L534.3 492.8 L539.1 489.5 L544.0 486.5 L549.1 483.6 L554.4 481.1 L559.8 478.7 L565.4 476.6 L571.2 474.8 L577.1 473.2 L583.1 471.9 L589.2 470.8 L595.5 470.0 L601.9 469.4 L608.3 469.1 L614.9 469.1 L621.5 469.3 L628.2 469.8 L634.9 470.6 L641.6 471.6 L648.4 472.9 L655.3 474.4 L662.1 476.2 L668.9 478.2 L675.8 480.5 L682.6 483.0 L689.3 485.7 L696.0 488.7 L702.7 492.0 L709.3 495.4 L715.9 499.1 L722.3 503.0 L728.7 507.1 L735.0 511.4 L741.1 515.9 L747.1 520.5 L753.0 525.4 L758.8 530.5 L764.4 535.7 L769.8 541.0 L775.1 546.5 L780.2 552.2 L785.1 558.0 L789.9 563.9 L794.4 570.0 L798.8 576.1 L802.9 582.3 L806.8 588.6 L810.5 595.0 L813.9 601.5 L817.1 608.0 L820.1 614.6 L822.9 621.2 L825.4 627.9 L827.6 634.5 L829.6 641.2 L831.3 647.8 L832.8 654.5 L834.0 661.1 L834.9 667.7 L835.6 674.2 L836.0 680.7 L836.1 687.1 L793.4 675.2 L793.3 670.4 L793.0 665.5 L792.5 660.5 L791.8 655.6 L790.9 650.6 L789.8 645.6 L788.5 640.5 L787.0 635.5 L785.3 630.5 L783.4 625.5 L781.4 620.5 L779.1 615.5 L776.7 610.6 L774.1 605.7 L771.3 600.9 L768.4 596.1 L765.2 591.4 L762.0 586.8 L758.5 582.2 L755.0 577.8 L751.2 573.4 L747.4 569.1 L743.4 565.0 L739.3 560.9 L735.1 557.0 L730.7 553.2 L726.3 549.5 L721.7 546.0 L717.1 542.6 L712.4 539.3 L707.6 536.2 L702.7 533.3 L697.7 530.5 L692.8 527.9 L687.7 525.5 L682.6 523.2 L677.5 521.2 L672.4 519.3 L667.3 517.5 L662.1 516.0 L656.9 514.7 L651.8 513.5 L646.7 512.6 L641.6 511.8 L636.5 511.2 L631.4 510.9 L626.5 510.7 L621.5 510.7 L616.6 510.9 L611.8 511.4 L607.1 512.0 L602.5 512.8 L597.9 513.8 L593.5 515.0 L589.1 516.4 L584.9 517.9 L580.8 519.7 L576.8 521.7 L573.0 523.8 L569.2 526.1 L565.7 528.6 L562.2 531.2 L559.0 534.0 L555.8 537.0 L552.9 540.1 L550.1 543.4 L547.5 546.8 L545.1 550.4 L542.8 554.1 L540.8 557.9 L538.9 561.9 L537.2 566.0 L535.7 570.2 L534.4 574.5 L533.3 578.9 L532.4 583.4 L531.7 587.9 L531.2 592.6 L530.9 597.3 L530.8 602.1Z" fill="none" stroke="#000" stroke-width="1"/>
<path d="M640.5 281.8 L814.5 330.2 L820.3 466.8 L816.1 462.8 L811.7 458.8 L807.3 454.9 L802.8 451.2 L798.2 447.5 L793.6 444.0 L788.8 440.6 L784.0 437.4 L779.2 434.2 L774.3 431.2 L769.3 428.4 L764.3 425.6 L759.2 423.0 L754.1 420.6 L748.9 418.3 L743.8 416.2 L738.6 414.2 L733.3 412.3 L728.1 410.6 L722.9 409.1 L717.6 407.7 L712.3 406.5 L707.1 405.4 L701.8 404.5 L696.6 403.7 L691.4 403.1 L686.2 402.7 L681.0 402.4 L675.8 402.3 L670.7 402.4 L665.7 402.6 L660.7 403.0 L655.7 403.6 L650.8 404.3 L645.9 405.1 L641.1 406.1 L636.4 407.3 L631.7 408.7 L627.2 410.2 L622.7 411.8Z" fill="#77fb77"/>
<path d="M640.5 281.8 L814.5 330.2 L820.3 466.8 L816.1 462.8 L811.7 458.8 L807.3 454.9 L802.8 451.2 L798.2 447.5 L793.6 444.0 L788.8 440.6 L784.0 437.4 L779.2 434.2 L774.3 431.2 L769.3 428.4 L764.3 425.6 L759.2 423.0 L754.1 420.6 L748.9 418.3 L743.8 416.2 L738.6 414.2 L733.3 412.3 L728.1 410.6 L722.9 409.1 L717.6 407.7 L712.3 406.5 L707.1 405.4 L701.8 404.5 L696.6 403.7 L691.4 403.1 L686.2 402.7 L681.0 402.4 L675.8 402.3 L670.7 402.4 L665.7 402.6 L660.7 403.0 L655.7 403.6 L650.8 404.3 L645.9 405.1 L641.1 406.1 L636.4 407.3 L631.7 408.7 L627.2 410.2 L622.7 411.8Z" fill="none" stroke="#000" stroke-width="1"/>
<path d="M814.5 330.2 L902.4 233.1 L920.3 356.5 L820.3 466.8Z" fill="#357535"/>
<path d="M814.5 330.2 L902.4 233.1 L920.3 356.5 L820.3 466.8Z" fill="none" stroke="#000" stroke-width="1"/>
<path d="M640.5 281.8 L728.5 184.7 L902.4 233.1 L814.5 330.2Z M706.4 269.6 L750.1 221.3 L836.5 245.4 L792.8 293.6Z" fill="#61df61" fill-rule="evenodd" stroke="#000" stroke-width="1"/>
<path d="M706.4 269.6 L750.1 221.3 L750.1 281.7Z" fill="#316c31"/>
<path d="M750.1 221.3 L836.5 245.4 L792.8 293.6 L750.1 281.7Z" fill="#70f770"/>
<path d="M706.4 269.6 L750.1 221.3 L836.5 245.4 L792.8 293.6Z" fill="none" stroke="#000" stroke-width="1"/>
<path d="M750.1 221.3 L750.1 281.7" fill="none" stroke="#000" stroke-width="1"/>
<path d="M858.4 555.0 L856.5 556.1 L854.6 557.0 L852.6 557.7 L850.5 558.2 L848.3 558.5 L846.1 558.7 L843.8 558.6 L841.4 558.4 L839.0 557.9 L836.6 557.3 L834.1 556.5 L831.6 555.5 L829.2 554.4 L826.7 553.0 L824.3 551.5 L821.9 549.9 L819.5 548.1 L817.2 546.1 L815.0 544.0 L812.8 541.8 L810.7 539.5 L808.7 537.0 L806.8 534.5 L805.0 531.9 L803.3 529.1 L801.8 526.4 L800.4 523.6 L799.1 520.7 L797.9 517.8 L796.9 514.9 L796.1 512.0 L795.3 509.1 L794.8 506.2 L794.4 503.4 L794.2 500.6 L794.1 497.9 L794.2 495.2 L794.5 492.6 L794.9 490.2 L795.5 487.8 L796.2 485.5 L797.1 483.3 L798.1 481.3 L799.3 479.5 L800.6 477.7 L802.0 476.2 L803.6 474.8 L805.3 473.5 L784.1 487.4 L782.3 488.7 L780.7 490.1 L779.3 491.7 L778.0 493.4 L776.9 495.3 L775.9 497.2 L775.2 499.3 L774.6 501.4 L774.2 503.7 L774.0 506.1 L773.9 508.5 L774.1 511.0 L774.4 513.6 L774.9 516.2 L775.5 518.9 L776.3 521.6 L777.3 524.3 L778.4 527.1 L779.6 529.8 L780.9 532.6 L782.4 535.3 L784.0 538.0 L785.7 540.7 L787.5 543.4 L789.3 545.9 L791.2 548.5 L793.3 550.9 L795.3 553.3 L797.4 555.5 L799.6 557.7 L801.8 559.7 L804.0 561.6 L806.2 563.4 L808.4 565.0 L810.7 566.5 L812.9 567.8 L815.1 568.9 L817.3 569.9 L819.5 570.7 L821.7 571.3 L823.8 571.7 L825.9 571.9 L827.9 571.9 L829.9 571.7 L831.8 571.3 L833.6 570.7 L835.4 569.9 L837.1 568.9Z" fill="url(#g3)"/>
<path d="M784.1 487.4 L782.3 488.7 L780.7 490.1 L779.3 491.7 L778.0 493.4 L776.9 495.3 L775.9 497.2 L775.2 499.3 L774.6 501.4 L774.2 503.7 L774.0 506.1 L773.9 508.5 L774.1 511.0 L774.4 513.6 L774.9 516.2 L775.5 518.9 L776.3 521.6 L777.3 524.3 L778.4 527.1 L779.6 529.8 L780.9 532.6 L782.4 535.3 L784.0 538.0 L785.7 540.7 L787.5 543.4 L789.3 545.9 L791.2 548.5 L793.3 550.9 L795.3 553.3 L797.4 555.5 L799.6 557.7 L801.8 559.7 L804.0 561.6 L806.2 563.4 L808.4 565.0 L810.7 566.5 L812.9 567.8 L815.1 568.9 L817.3 569.9 L819.5 570.7 L821.7 571.3 L823.8 571.7 L825.9 571.9 L827.9 571.9 L829.9 571.7 L831.8 571.3 L833.6 570.7 L835.4 569.9 L837.1 568.9" fill="none" stroke="#000" stroke-width="1"/>
<path d="M858.4 555.0 L837.1 568.9" fill="none" stroke="#000" stroke-width="1"/>
<path d="M805.3 473.5 L784.1 487.4" fill="none" stroke="#000" stroke-width="1"/>
<path d="M853.8 490.0 L856.4 493.4 L858.8 496.9 L861.0 500.5 L862.9 504.2 L864.7 508.0 L866.2 511.9 L867.4 515.8 L868.4 519.6 L869.0 523.4 L869.4 527.2 L869.6 530.8 L869.4 534.4 L868.9 537.7 L868.2 540.9 L867.2 543.9 L865.9 546.7 L864.3 549.2 L862.5 551.5 L860.5 553.4 L858.2 555.1 L855.8 556.5 L853.2 557.5 L850.4 558.2 L847.4 558.6 L844.4 558.6 L841.2 558.3 L838.0 557.7 L834.8 556.7 L831.5 555.5 L828.2 553.9 L824.9 552.0 L821.7 549.8 L818.6 547.3 L815.6 544.6 L812.7 541.7 L809.9 538.5 L807.3 535.2 L804.9 531.7 L802.7 528.1 L800.7 524.3 L799.0 520.5 L797.5 516.7 L796.3 512.8 L795.3 508.9 L794.6 505.1 L794.2 501.4 L794.1 497.7 L794.3 494.2 L794.8 490.8 L795.5 487.6 L796.5 484.6 L797.8 481.9 L799.4 479.3 L801.2 477.1 L803.2 475.1 L805.4 473.4 L807.9 472.1 L810.5 471.0 L813.3 470.3 L816.2 470.0 L819.3 469.9 L822.4 470.2 L825.7 470.8 L828.9 471.8 L832.2 473.1 L835.5 474.7 L838.8 476.6 L842.0 478.8 L845.1 481.2 L848.1 484.0 L851.0 486.9 L853.8 490.0Z" fill="#5dcf5d"/>
<path d="M853.8 490.0 L856.4 493.4 L858.8 496.9 L861.0 500.5 L862.9 504.2 L864.7 508.0 L866.2 511.9 L867.4 515.8 L868.4 519.6 L869.0 523.4 L869.4 527.2 L869.6 530.8 L869.4 534.4 L868.9 537.7 L868.2 540.9 L867.2 543.9 L865.9 546.7 L864.3 549.2 L862.5 551.5 L860.5 553.4 L858.2 555.1 L855.8 556.5 L853.2 557.5 L850.4 558.2 L847.4 558.6 L844.4 558.6 L841.2 558.3 L838.0 557.7 L834.8 556.7 L831.5 555.5 L828.2 553.9 L824.9 552.0 L821.7 549.8 L818.6 547.3 L815.6 544.6 L812.7 541.7 L809.9 538.5 L807.3 535.2 L804.9 531.7 L802.7 528.1 L800.7 524.3 L799.0 520.5 L797.5 516.7 L796.3 512.8 L795.3 508.9 L794.6 505.1 L794.2 501.4 L794.1 497.7 L794.3 494.2 L794.8 490.8 L795.5 487.6 L796.5 484.6 L797.8 481.9 L799.4 479.3 L801.2 477.1 L803.2 475.1 L805.4 473.4 L807.9 472.1 L810.5 471.0 L813.3 470.3 L816.2 470.0 L819.3 469.9 L822.4 470.2 L825.7 470.8 L828.9 471.8 L832.2 473.1 L835.5 474.7 L838.8 476.6 L842.0 478.8 L845.1 481.2 L848.1 484.0 L851.0 486.9 L853.8 490.0Z" fill="none" stroke="#000" stroke-width="1"/>
<path d="M845.1 499.6 L847.0 502.0 L848.7 504.6 L850.2 507.3 L851.5 510.0 L852.6 512.8 L853.5 515.6 L854.1 518.4 L854.5 521.2 L854.7 523.9 L854.6 526.4 L854.2 528.9 L853.6 531.2 L852.8 533.3 L851.7 535.1 L850.4 536.8 L848.9 538.2 L847.3 539.4 L845.4 540.2 L843.4 540.8 L841.3 541.1 L839.1 541.1 L836.8 540.8 L834.4 540.3 L832.0 539.4 L829.6 538.2 L827.3 536.8 L824.9 535.2 L822.7 533.3 L820.6 531.2 L818.5 529.0 L816.7 526.5 L815.0 523.9 L813.5 521.3 L812.1 518.5 L811.0 515.7 L810.2 512.9 L809.5 510.1 L809.1 507.4 L809.0 504.7 L809.1 502.1 L809.5 499.7 L810.1 497.4 L810.9 495.3 L812.0 493.4 L813.2 491.7 L814.7 490.3 L816.4 489.2 L818.3 488.3 L820.3 487.7 L822.4 487.4 L824.6 487.4 L826.9 487.7 L829.3 488.3 L831.7 489.2 L834.1 490.3 L836.4 491.7 L838.7 493.4 L841.0 495.2 L843.1 497.3 L845.1 499.6Z" fill="url(#g4)"/>
<g clip-path="url(#hc)"><path d="M817.5 517.7 L819.4 520.1 L821.1 522.7 L822.6 525.4 L823.9 528.1 L825.0 530.9 L825.9 533.7 L826.5 536.5 L826.9 539.3 L827.1 542.0 L827.0 544.5 L826.6 547.0 L826.0 549.3 L825.2 551.3 L824.1 553.2 L822.8 554.9 L821.3 556.3 L819.7 557.5 L817.8 558.3 L815.8 558.9 L813.7 559.2 L811.5 559.2 L809.2 558.9 L806.8 558.3 L804.4 557.5 L802.0 556.3 L799.7 554.9 L797.3 553.3 L795.1 551.4 L793.0 549.3 L790.9 547.0 L789.1 544.6 L787.4 542.0 L785.9 539.4 L784.5 536.6 L783.4 533.8 L782.6 531.0 L781.9 528.2 L781.5 525.4 L781.4 522.8 L781.5 520.2 L781.9 517.8 L782.5 515.5 L783.3 513.4 L784.4 511.5 L785.6 509.8 L787.1 508.4 L788.8 507.3 L790.7 506.4 L792.7 505.8 L794.8 505.5 L797.0 505.5 L799.3 505.8 L801.7 506.4 L804.1 507.2 L806.5 508.4 L808.8 509.8 L811.1 511.4 L813.4 513.3 L815.5 515.4 L817.5 517.7Z" fill="#2d6a2d" stroke="#000"/></g>
<path d="M845.1 499.6 L847.0 502.0 L848.7 504.6 L850.2 507.3 L851.5 510.0 L852.6 512.8 L853.5 515.6 L854.1 518.4 L854.5 521.2 L854.7 523.9 L854.6 526.4 L854.2 528.9 L853.6 531.2 L852.8 533.3 L851.7 535.1 L850.4 536.8 L848.9 538.2 L847.3 539.4 L845.4 540.2 L843.4 540.8 L841.3 541.1 L839.1 541.1 L836.8 540.8 L834.4 540.3 L832.0 539.4 L829.6 538.2 L827.3 536.8 L824.9 535.2 L822.7 533.3 L820.6 531.2 L818.5 529.0 L816.7 526.5 L815.0 523.9 L813.5 521.3 L812.1 518.5 L811.0 515.7 L810.2 512.9 L809.5 510.1 L809.1 507.4 L809.0 504.7 L809.1 502.1 L809.5 499.7 L810.1 497.4 L810.9 495.3 L812.0 493.4 L813.2 491.7 L814.7 490.3 L816.4 489.2 L818.3 488.3 L820.3 487.7 L822.4 487.4 L824.6 487.4 L826.9 487.7 L829.3 488.3 L831.7 489.2 L834.1 490.3 L836.4 491.7 L838.7 493.4 L841.0 495.2 L843.1 497.3 L845.1 499.6Z" fill="none" stroke="#000" stroke-width="1"/>
<path d="M1085.8 515.6 L1082.1 514.7 L1078.4 513.9 L1074.7 513.1 L1070.8 512.5 L1066.9 512.0 L1063.0 511.6 L1059.0 511.3 L1055.0 511.1 L1051.0 511.0 L1047.0 511.1 L1043.0 511.3 L1039.1 511.5 L1035.1 511.9 L1031.2 512.4 L1027.3 513.0 L1023.5 513.8 L1019.8 514.6 L1016.2 515.5 L1012.6 516.5 L1009.1 517.7 L1005.8 518.9 L1002.6 520.2 L999.4 521.6 L996.5 523.1 L993.6 524.7 L990.9 526.4 L988.4 528.1 L986.0 529.9 L983.8 531.8 L981.8 533.7 L979.9 535.7 L978.2 537.7 L976.7 539.8 L975.5 541.9 L974.4 544.1 L973.5 546.2 L972.8 548.4 L972.3 550.6 L972.0 552.9 L971.9 555.1 L971.9 595.9 L972.0 593.6 L972.3 591.4 L972.8 589.2 L973.5 587.0 L974.4 584.8 L975.5 582.7 L976.7 580.6 L978.2 578.5 L979.9 576.5 L981.8 574.5 L983.8 572.6 L986.0 570.7 L988.4 568.9 L990.9 567.2 L993.6 565.5 L996.5 563.9 L999.4 562.4 L1002.6 561.0 L1005.8 559.7 L1009.1 558.4 L1012.6 557.3 L1016.2 556.3 L1019.8 555.4 L1023.5 554.5 L1027.3 553.8 L1031.2 553.2 L1035.1 552.7 L1039.1 552.3 L1043.0 552.0 L1047.0 551.9 L1051.0 551.8 L1055.0 551.9 L1059.0 552.1 L1063.0 552.3 L1066.9 552.7 L1070.8 553.3 L1074.7 553.9 L1078.4 554.6 L1082.1 555.5 L1085.8 556.4Z" fill="url(#g5)"/>
<path d="M971.9 595.9 L972.0 593.6 L972.3 591.4 L972.8 589.2 L973.5 587.0 L974.4 584.8 L975.5 582.7 L976.7 580.6 L978.2 578.5 L979.9 576.5 L981.8 574.5 L983.8 572.6 L986.0 570.7 L988.4 568.9 L990.9 567.2 L993.6 565.5 L996.5 563.9 L999.4 562.4 L1002.6 561.0 L1005.8 559.7 L1009.1 558.4 L1012.6 557.3 L1016.2 556.3 L1019.8 555.4 L1023.5 554.5 L1027.3 553.8 L1031.2 553.2 L1035.1 552.7 L1039.1 552.3 L1043.0 552.0 L1047.0 551.9 L1051.0 551.8 L1055.0 551.9 L1059.0 552.1 L1063.0 552.3 L1066.9 552.7 L1070.8 553.3 L1074.7 553.9 L1078.4 554.6 L1082.1 555.5 L1085.8 556.4" fill="none" stroke="#000" stroke-width="1"/>
<path d="M1085.8 515.6 L1085.8 556.4" fill="none" stroke="#000" stroke-width="1"/>
<path d="M1085.8 515.6 L1138.1 457.8 L1138.1 498.6 L1085.8 556.4Z" fill="#316c31"/>
<path d="M1085.8 515.6 L1138.1 457.8 L1138.1 498.6 L1085.8 556.4Z" fill="none" stroke="#000" stroke-width="1"/>
<path d="M962.6 651.6 L1014.9 593.8 L1014.9 634.6 L962.6 692.4Z" fill="#316c31"/>
<path d="M962.6 651.6 L1014.9 593.8 L1014.9 634.6 L962.6 692.4Z" fill="none" stroke="#000" stroke-width="1"/>
<path d="M852.2 620.9 L962.6 651.6 L1014.9 593.8 L1011.3 592.8 L1007.8 591.6 L1004.4 590.3 L1001.1 588.9 L998.0 587.5 L995.0 585.9 L992.2 584.3 L989.5 582.5 L987.0 580.7 L984.7 578.9 L982.5 576.9 L980.5 574.9 L978.8 572.9 L977.2 570.8 L975.8 568.6 L974.6 566.4 L973.6 564.2 L972.9 562.0 L972.3 559.7 L972.0 557.4 L971.9 555.1 L972.0 552.8 L972.3 550.6 L972.8 548.3 L973.5 546.0 L974.5 543.8 L975.6 541.6 L977.0 539.4 L978.6 537.3 L980.3 535.2 L982.3 533.2 L984.4 531.3 L986.7 529.4 L989.2 527.5 L991.9 525.8 L994.7 524.1 L997.7 522.5 L1000.8 521.0 L1004.0 519.6 L1007.4 518.3 L1010.9 517.1 L1014.5 516.0 L1018.2 515.0 L1022.0 514.1 L1025.9 513.3 L1029.8 512.6 L1033.8 512.1 L1037.8 511.6 L1041.9 511.3 L1046.0 511.1 L1050.1 511.0 L1054.2 511.1 L1058.3 511.2 L1062.4 511.5 L1066.4 511.9 L1070.4 512.4 L1074.4 513.1 L1078.2 513.8 L1082.0 514.7 L1085.8 515.6 L1138.1 457.8 L1027.6 427.1Z" fill="#61df61"/>
<path d="M852.2 620.9 L962.6 651.6 L1014.9 593.8 L1011.3 592.8 L1007.8 591.6 L1004.4 590.3 L1001.1 588.9 L998.0 587.5 L995.0 585.9 L992.2 584.3 L989.5 582.5 L987.0 580.7 L984.7 578.9 L982.5 576.9 L980.5 574.9 L978.8 572.9 L977.2 570.8 L975.8 568.6 L974.6 566.4 L973.6 564.2 L972.9 562.0 L972.3 559.7 L972.0 557.4 L971.9 555.1 L972.0 552.8 L972.3 550.6 L972.8 548.3 L973.5 546.0 L974.5 543.8 L975.6 541.6 L977.0 539.4 L978.6 537.3 L980.3 535.2 L982.3 533.2 L984.4 531.3 L986.7 529.4 L989.2 527.5 L991.9 525.8 L994.7 524.1 L997.7 522.5 L1000.8 521.0 L1004.0 519.6 L1007.4 518.3 L1010.9 517.1 L1014.5 516.0 L1018.2 515.0 L1022.0 514.1 L1025.9 513.3 L1029.8 512.6 L1033.8 512.1 L1037.8 511.6 L1041.9 511.3 L1046.0 511.1 L1050.1 511.0 L1054.2 511.1 L1058.3 511.2 L1062.4 511.5 L1066.4 511.9 L1070.4 512.4 L1074.4 513.1 L1078.2 513.8 L1082.0 514.7 L1085.8 515.6 L1138.1 457.8 L1027.6 427.1Z" fill="none" stroke="#000" stroke-width="1"/>
<path d="M962.6 651.6 L962.6 692.4 L857.7 663.2 L857.5 655.0 L856.9 646.7 L855.8 638.2 L854.2 629.6 L852.2 620.9Z" fill="#6ff66f"/>
<path d="M962.6 651.6 L962.6 692.4 L857.7 663.2 L857.5 655.0 L856.9 646.7 L855.8 638.2 L854.2 629.6 L852.2 620.9Z" fill="none" stroke="#000" stroke-width="1"/>
<circle cx="348.600" cy="407" r="31.400" fill="#ffff00" shape-rendering="auto"/>
<g shape-rendering="auto"><circle cx="362" cy="421.500" r="3.800" fill="#fff" stroke="#000" stroke-width="1.100"/><path d="M365 424.500l5 5" stroke="#000" stroke-width="2"/></g>
<g fill="#fff" stroke="#787878" stroke-width="1" shape-rendering="auto">
<path d="M375.500 654v-23.500M378.500 654v-23.500" fill="none"/><path d="M377 609l-5.700 21.500h11.400z"/>
<path d="M379.300 654.500l12-13.500M380.800 656l12.200-13.700" fill="none"/><path d="M403.400 628.400l-16 9.700 8.600 7.200z"/>
<path d="M381 659.300l26 6M380.600 661.300l25.500 5.900" fill="none"/><path d="M429.700 672.100l-21.600-12.100-3.400 11.200z"/>
<circle cx="376.700" cy="657.900" r="3.600"/>
</g>
<g font-family="Liberation Sans, sans-serif" font-size="18" fill="#606060" shape-rendering="auto"><text x="371" y="593.500">Z</text><text x="405.500" y="619.500">Y</text><text x="440" y="677.500">X</text></g>
</svg>
<!-- watermark -->
<div class="a" style="left:1157px;top:770px;width:133px;height:36px;background:linear-gradient(rgba(255,255,255,.55),rgba(255,255,255,.75))"></div>
<svg class="a" style="left:1150px;top:768px" width="140" height="44" viewBox="0 0 140 44">
<defs><linearGradient id="wmg" x1="0" y1="0" x2="1" y2="0"><stop offset="0" stop-color="#3f6fc0"/><stop offset=".55" stop-color="#5aa0e8"/><stop offset=".8" stop-color="#f0a040"/><stop offset="1" stop-color="#e86030"/></linearGradient></defs>
<ellipse cx="34" cy="19.500" rx="28" ry="14.500" transform="rotate(-20 34 19.500)" fill="none" stroke="url(#wmg)" stroke-width="3"/>
<circle cx="21" cy="6.500" r="2.300" fill="#3f6fc0"/>
<text x="16" y="29" font-family="Liberation Serif, serif" font-style="italic" font-size="26" fill="#4a78c8">X</text>
<text x="34" y="29" font-family="Liberation Serif, serif" font-style="italic" font-size="26" fill="#ee7050">S</text>
<text x="63" y="24" font-family="Liberation Sans, Noto Sans CJK SC, sans-serif" font-weight="bold" font-size="23" fill="#5a6a9a" textLength="68" lengthAdjust="spacingAndGlyphs">资料网</text>
<text x="63" y="35" font-family="Liberation Mono, monospace" font-weight="bold" font-size="9.500" fill="#6a7aa8" textLength="67" lengthAdjust="spacingAndGlyphs">ZL.XS1616.COM</text>
</svg>
</body></html>
